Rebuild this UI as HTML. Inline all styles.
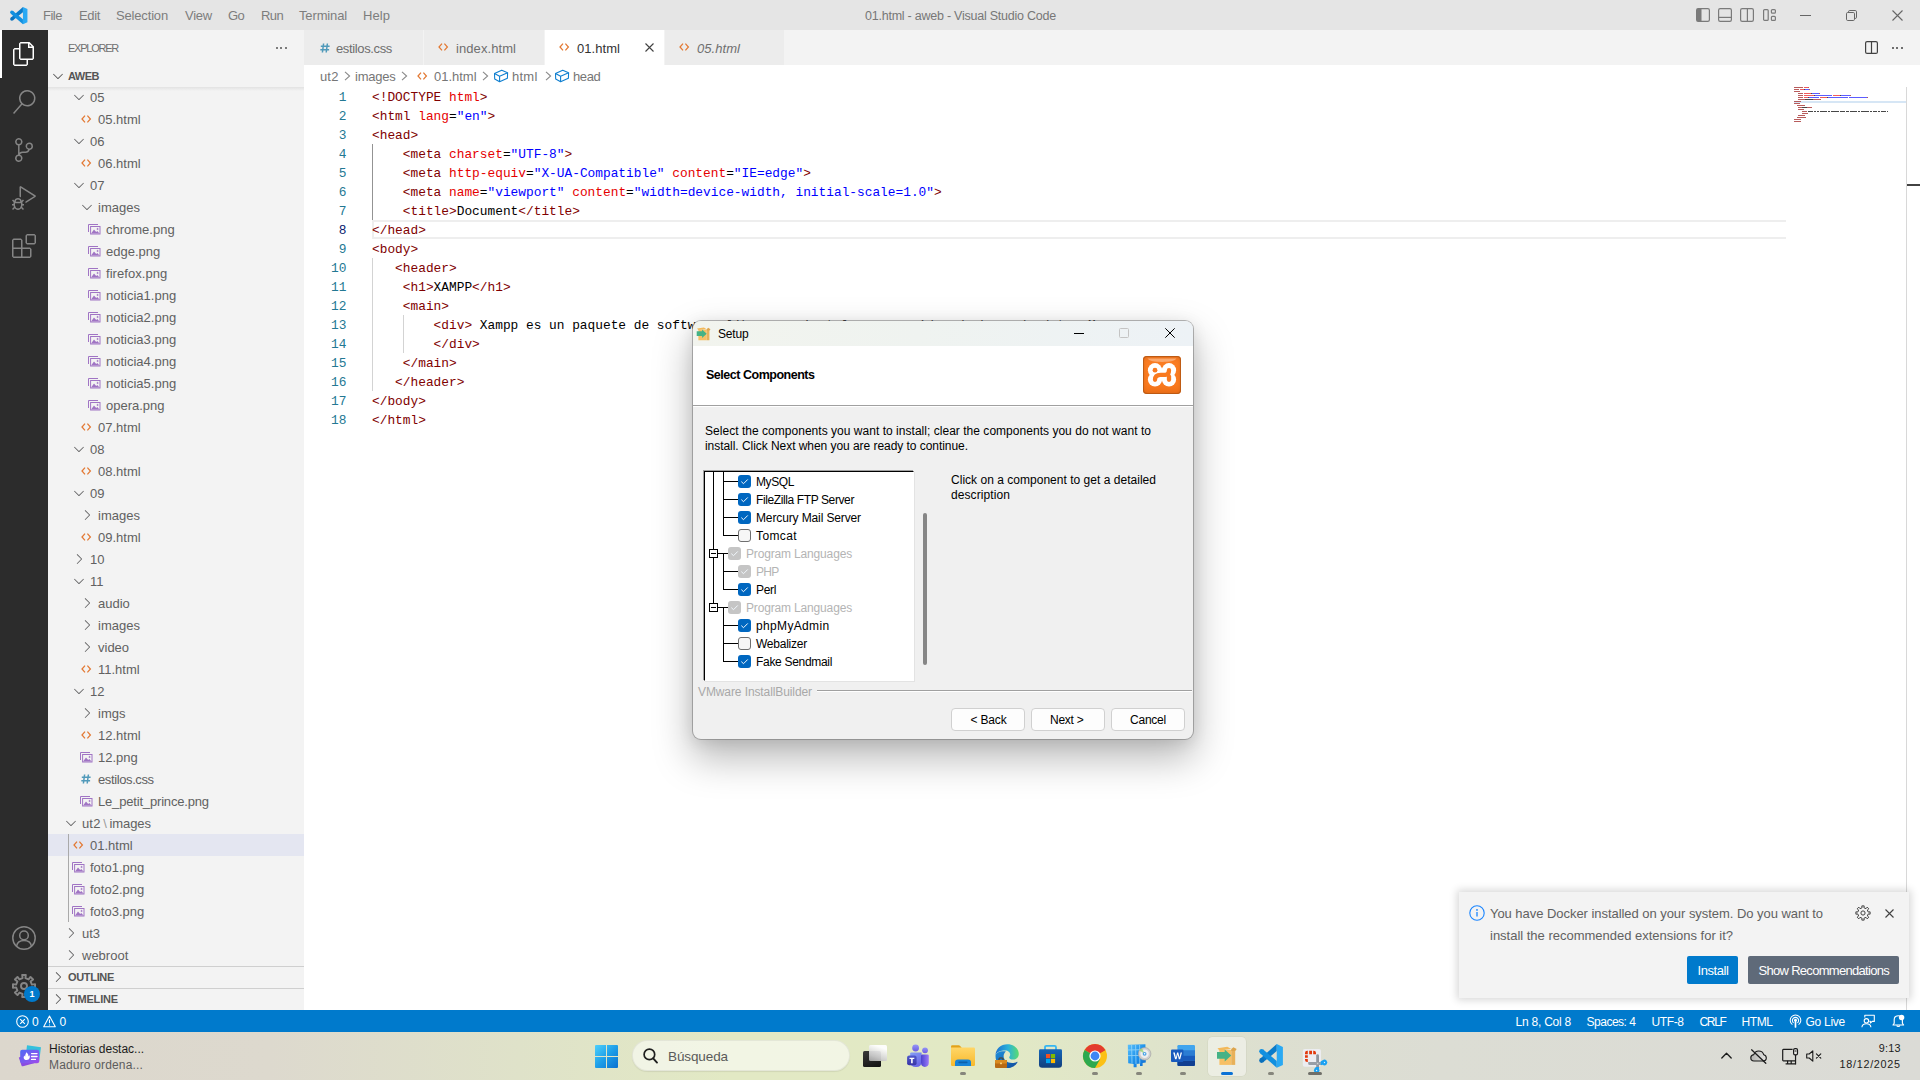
<!DOCTYPE html>
<html lang="en"><head><meta charset="utf-8"><title>01.html - aweb - Visual Studio Code</title>
<style>
*{box-sizing:border-box;margin:0;padding:0}
html,body{width:1920px;height:1080px;overflow:hidden;background:#fff}
body{font-family:"Liberation Sans",sans-serif;font-size:13px;color:#616161;position:relative}
.abs{position:absolute}
svg{display:block;overflow:visible}
/* title bar */
#titlebar{position:absolute;left:0;top:0;width:1920px;height:30px;background:#e5e5e5}
#titlebar .menu{position:absolute;top:0;height:30px;line-height:30px;font-size:13px;color:#808080;white-space:nowrap}
#titlebar .title{position:absolute;top:0;height:30px;line-height:30px;font-size:12.4px;color:#707070;white-space:nowrap}
/* activity bar */
#activity{position:absolute;left:0;top:30px;width:48px;height:980px;background:#2c2c2c}
/* sidebar */
#sidebar{position:absolute;left:48px;top:30px;width:256px;height:980px;background:#f3f3f3;overflow:hidden}
.row{position:absolute;left:0;width:256px;height:22px;line-height:22px;font-size:13px;color:#616161;white-space:nowrap}
.row .lbl{position:absolute;top:0}
.row svg{position:absolute}
/* editor */
#tabs{position:absolute;left:304px;top:30px;width:1616px;height:35px;background:#f3f3f3}
.tab{position:absolute;top:0;height:35px;background:#ececec;line-height:35px;font-size:13px;color:#6f6f6f;white-space:nowrap}
.tab.active{background:#fff;color:#333}
.tab .lbl{position:absolute;top:0}
#crumbs{position:absolute;left:304px;top:65px;width:1616px;height:22px;background:#fff;line-height:22px;font-size:13px;color:#767676;white-space:nowrap}
#crumbs span,#crumbs svg{position:absolute}
#editor{position:absolute;left:304px;top:87px;width:1616px;height:923px;background:#fff;overflow:hidden}
.ln{position:absolute;left:0;margin-top:.7px;width:42.5px;text-align:right;height:19px;line-height:19px;font-family:"Liberation Mono",monospace;font-size:12.83px;color:#237893;white-space:pre}
.cl{position:absolute;left:68px;margin-top:.7px;height:19px;line-height:19px;font-family:"Liberation Mono",monospace;font-size:12.83px;color:#000;white-space:pre}
.t{color:#800000}.a{color:#e50000}.s{color:#0000ff}
/* status bar */
#status{position:absolute;left:0;top:1010px;width:1920px;height:22px;background:#007acc;color:#fff;font-size:12px;line-height:22px;white-space:nowrap}
#status span,#status svg{position:absolute}
/* taskbar */
#taskbar{position:absolute;left:0;top:1032px;width:1920px;height:48px;background:linear-gradient(90deg,#dcd7cd 0%,#ddd9ce 14%,#dfe2c9 27%,#e2e9c4 38%,#e2e9c5 52%,#dfe4cb 60%,#dddfd0 66%,#dcddd4 75%,#dbdbd6 100%)}
</style></head>
<body>
<div id="titlebar">
<svg style="position:absolute;left:10.00px;top:6.50px;" width="17.5" height="17.5" viewBox="0 0 24 24"><path d="M17.75 .1 L1.04 14.67 L4.16 18.33 L17.75 7.1 Z" fill="#0a7bca"/><circle cx="2.6" cy="16.5" r="2.4" fill="#0a70bb"/><path d="M17.75 23.7 L1.04 9.13 L4.16 5.47 L17.75 16.9 Z" fill="#1290e0"/><circle cx="2.6" cy="7.3" r="2.4" fill="#1290e0"/><path d="M17.75 .1 L23.9 2.9 V20.9 L17.75 23.7 Z" fill="#2aa9f3"/></svg>
<span style="position:absolute;top:0.80px;height:30px;line-height:30px;font-size:13px;white-space:pre;left:43.00px;color:#7d7d7d;letter-spacing:-0.487px;">File</span>
<span style="position:absolute;top:0.80px;height:30px;line-height:30px;font-size:13px;white-space:pre;left:79.00px;color:#7d7d7d;letter-spacing:-0.350px;">Edit</span>
<span style="position:absolute;top:0.80px;height:30px;line-height:30px;font-size:13px;white-space:pre;left:116.00px;color:#7d7d7d;letter-spacing:-0.165px;">Selection</span>
<span style="position:absolute;top:0.80px;height:30px;line-height:30px;font-size:13px;white-space:pre;left:185.00px;color:#7d7d7d;letter-spacing:-0.236px;">View</span>
<span style="position:absolute;top:0.80px;height:30px;line-height:30px;font-size:13px;white-space:pre;left:228.00px;color:#7d7d7d;letter-spacing:-0.671px;">Go</span>
<span style="position:absolute;top:0.80px;height:30px;line-height:30px;font-size:13px;white-space:pre;left:261.00px;color:#7d7d7d;letter-spacing:-0.616px;">Run</span>
<span style="position:absolute;top:0.80px;height:30px;line-height:30px;font-size:13px;white-space:pre;left:299.00px;color:#7d7d7d;letter-spacing:-0.141px;">Terminal</span>
<span style="position:absolute;top:0.80px;height:30px;line-height:30px;font-size:13px;white-space:pre;left:363.00px;color:#7d7d7d;letter-spacing:0.066px;">Help</span>
<span style="position:absolute;top:0.80px;height:30px;line-height:30px;font-size:12.5px;white-space:pre;left:865.00px;color:#777;letter-spacing:-0.234px;">01.html - aweb - Visual Studio Code</span>
<svg style="position:absolute;left:1696.00px;top:8.00px;" width="14" height="14" viewBox="0 0 14 14"><rect x=".6" y=".6" width="12.8" height="12.8" rx="1.6" fill="none" stroke="#7a7a7a" stroke-width="1.2"/><path d="M.6 2.2 Q.6 .6 2.2 .6 H5.5 V13.4 H2.2 Q.6 13.4 .6 11.8Z" fill="#7a7a7a"/></svg>
<svg style="position:absolute;left:1718.00px;top:8.00px;" width="14" height="14" viewBox="0 0 14 14"><rect x=".6" y=".6" width="12.8" height="12.8" rx="1.6" fill="none" stroke="#7a7a7a" stroke-width="1.2"/><path d="M.6 9.4H13.4" stroke="#7a7a7a" stroke-width="1.2"/></svg>
<svg style="position:absolute;left:1740.00px;top:8.00px;" width="14" height="14" viewBox="0 0 14 14"><rect x=".6" y=".6" width="12.8" height="12.8" rx="1.6" fill="none" stroke="#7a7a7a" stroke-width="1.2"/><path d="M7.4 .6V13.4" stroke="#7a7a7a" stroke-width="1.2"/></svg>
<svg style="position:absolute;left:1763.00px;top:9.00px;" width="13" height="12" viewBox="0 0 13 12"><rect x=".6" y=".6" width="4.6" height="10.8" rx="1" fill="none" stroke="#7a7a7a" stroke-width="1.2"/><rect x="8.4" y=".6" width="4" height="3.6" rx="1" fill="none" stroke="#7a7a7a" stroke-width="1.2"/><rect x="8.4" y="7.4" width="4" height="4" rx="1" fill="none" stroke="#7a7a7a" stroke-width="1.2"/></svg>
<div class="abs" style="left:1800px;top:15px;width:11px;height:1px;background:#666"></div>
<svg style="position:absolute;left:1846.00px;top:10.00px;" width="11" height="11" viewBox="0 0 11 11"><rect x=".5" y="2.5" width="8" height="8" rx="1.2" fill="none" stroke="#666" stroke-width="1"/><path d="M2.5 2.4 V1.8 Q2.5 .5 3.8 .5 H9.2 Q10.5 .5 10.5 1.8 V7.2 Q10.5 8.5 9.2 8.5 H8.6" fill="none" stroke="#666" stroke-width="1"/></svg>
<svg style="position:absolute;left:1892.00px;top:10.00px;" width="11" height="11" viewBox="0 0 11 11"><path d="M.5 .5 L10.5 10.5 M10.5 .5 L.5 10.5" stroke="#666" stroke-width="1.1" fill="none"/></svg>
</div>
<div id="activity">
<div class="abs" style="left:0;top:0;width:2px;height:48px;background:#fff"></div>
<svg style="position:absolute;left:12.00px;top:12.00px;" width="24" height="24" viewBox="0 0 24 24"><path fill="#fff" d="M17.5 0H8.5L7 1.5V6H2.5L1 7.5V22.5699L2.5 24H14.5699L16 22.5699V18H20.7L22 16.5699V4.5L17.5 0ZM17.5 2.12L19.88 4.5H17.5V2.12ZM14.5 22.5H2.5V7.5H7V16.5699L8.5 18H14.5V22.5ZM20.5 16.5H8.5V1.5H16V6H20.5V16.5Z"/></svg>
<svg style="position:absolute;left:12.00px;top:60.00px;" width="24" height="24" viewBox="0 0 24 24"><path fill="#858585" d="M15.25 0a8.25 8.25 0 0 0-6.18 13.72L1 22.88l1.12 1 8.05-9.12A8.251 8.251 0 1 0 15.25.01V0zm0 15a6.75 6.75 0 1 1 0-13.5 6.75 6.75 0 0 1 0 13.5z"/></svg>
<svg style="position:absolute;left:12.00px;top:108.00px;" width="24" height="24" viewBox="0 0 24 24"><path fill="#858585" d="M21.007 8.222A3.738 3.738 0 0 0 15.045 5.2a3.737 3.737 0 0 0 1.156 6.583 2.988 2.988 0 0 1-2.668 1.67h-2.99a4.456 4.456 0 0 0-2.989 1.165V7.4a3.737 3.737 0 1 0-1.494 0v9.117a3.776 3.776 0 1 0 1.816.099 2.99 2.99 0 0 1 2.668-1.667h2.99a4.484 4.484 0 0 0 4.223-3.039 3.736 3.736 0 0 0 3.25-3.687zM4.565 3.738a2.242 2.242 0 1 1 4.484 0 2.242 2.242 0 0 1-4.484 0zm4.484 16.441a2.242 2.242 0 1 1-4.484 0 2.242 2.242 0 0 1 4.484 0zm8.221-9.715a2.242 2.242 0 1 1 0-4.485 2.242 2.242 0 0 1 0 4.485z"/></svg>
<svg style="position:absolute;left:12.00px;top:156.00px;" width="24" height="24" viewBox="0 0 24 24"><path fill="#858585" d="M10.94 13.5l-1.32 1.32a3.73 3.73 0 0 0-7.24 0L1.06 13.5 0 14.56l1.72 1.72-.22.22V18H0v1.5h1.5v.08c.077.489.214.966.41 1.42L0 22.94 1.06 24l1.65-1.65A4.308 4.308 0 0 0 6 24a4.31 4.31 0 0 0 3.29-1.65L10.94 24 12 22.94 10.09 21c.198-.464.336-.951.41-1.45v-.1H12V18h-1.5v-1.5l-.22-.22L12 14.56l-1.06-1.06zM6 13.5a2.25 2.25 0 0 1 2.25 2.25h-4.5A2.25 2.25 0 0 1 6 13.5zm3 6a3.33 3.33 0 0 1-3 3 3.33 3.33 0 0 1-3-3v-2.25h6v2.25zm14.76-9.9v1.26L13.5 17.37V15.6l8.5-5.37L9 2v9.46a5.07 5.07 0 0 0-1.5-.72V.63L8.64 0l15.12 9.6z"/></svg>
<svg style="position:absolute;left:12.00px;top:204.00px;" width="24" height="24" viewBox="0 0 24 24"><path fill="#858585" d="M13.5 1.5L15 0h7.5L24 1.5V9l-1.5 1.5H15L13.5 9V1.5zm1.5 0V9h7.5V1.5H15zM0 15V6l1.5-1.5H9L10.5 6v7.5H18l1.5 1.5v7.5L18 24H1.5L0 22.5V15zm9-1.5V6H1.5v7.5H9zM9 15H1.5v7.5H9V15zm1.5 7.5H18V15h-7.5v7.5z"/></svg>
<svg style="position:absolute;left:12.00px;top:896.00px;" width="24" height="24" viewBox="0 0 24 24"><circle cx="12" cy="12" r="11.2" fill="none" stroke="#858585" stroke-width="1.5"/><circle cx="12" cy="9.4" r="4.3" fill="none" stroke="#858585" stroke-width="1.5"/><path d="M4.6 20.2 C5.2 16.4 8 14.6 12 14.6 C16 14.6 18.8 16.4 19.4 20.2" fill="none" stroke="#858585" stroke-width="1.5"/></svg>
<svg style="position:absolute;left:12.00px;top:943.50px;" width="24" height="24" viewBox="0 0 24 24"><path d="M10.59 4.12 L10.16 0.95 L13.84 0.95 L13.41 4.12 L16.57 5.44 L18.51 2.89 L21.11 5.49 L18.56 7.43 L19.88 10.59 L23.05 10.16 L23.05 13.84 L19.88 13.41 L18.56 16.57 L21.11 18.51 L18.51 21.11 L16.57 18.56 L13.41 19.88 L13.84 23.05 L10.16 23.05 L10.59 19.88 L7.43 18.56 L5.49 21.11 L2.89 18.51 L5.44 16.57 L4.12 13.41 L0.95 13.84 L0.95 10.16 L4.12 10.59 L5.44 7.43 L2.89 5.49 L5.49 2.89 L7.43 5.44Z" fill="none" stroke="#858585" stroke-width="1.9" stroke-linejoin="round"/><circle cx="12" cy="12" r="3" fill="none" stroke="#858585" stroke-width="1.9"/></svg>
<div class="abs" style="left:24px;top:956px;width:16px;height:16px;border-radius:8px;background:#007acc;color:#fff;font-size:9px;font-weight:700;line-height:16px;text-align:center">1</div>
</div>
<div id="sidebar">
<span style="position:absolute;top:8.00px;height:20px;line-height:20px;font-size:11px;white-space:pre;left:20.00px;color:#6f6f6f;letter-spacing:-1.239px;">EXPLORER</span>
<div class="abs" style="left:227.5px;top:17px;width:2px;height:2px;border-radius:1px;background:#555"></div>
<div class="abs" style="left:232.0px;top:17px;width:2px;height:2px;border-radius:1px;background:#555"></div>
<div class="abs" style="left:236.5px;top:17px;width:2px;height:2px;border-radius:1px;background:#555"></div>
<svg style="position:absolute;left:1.50px;top:37.50px;" width="16" height="16" viewBox="0 0 16 16"><path fill="#555" d="M7.976 10.072l4.357-4.357.62.618L8.284 11h-.618L3 6.333l.619-.618 4.357 4.357z"/></svg>
<span style="position:absolute;top:36.00px;height:20px;line-height:20px;font-size:11px;white-space:pre;left:20.00px;color:#555;font-weight:700;letter-spacing:-0.500px;">AWEB</span>
<div class="abs" style="left:0;top:57px;width:256px;height:4px;background:linear-gradient(#e2e2e2,rgba(243,243,243,0))"></div>
<div class="abs" style="left:0;top:804px;width:256px;height:22px;background:#e4e6f1"></div>
<div class="abs" style="left:20px;top:804px;width:1px;height:88px;background:#a9a9a9"></div>
<svg style="position:absolute;left:23.00px;top:59.00px;" width="16" height="16" viewBox="0 0 16 16"><path fill="#646465" d="M7.976 10.072l4.357-4.357.62.618L8.284 11h-.618L3 6.333l.619-.618 4.357 4.357z"/></svg>
<span style="position:absolute;top:56.80px;height:22px;line-height:22px;font-size:13px;white-space:pre;left:42.00px;color:#616161;">05</span>
<svg style="position:absolute;left:32.80px;top:85.00px;" width="10.4" height="8" viewBox="0 0 10.4 8"><path d="M4 .7 L1 4 L4 7.3 M6.4 .7 L9.4 4 L6.4 7.3" fill="none" stroke="#e37933" stroke-width="1.25"/></svg>
<span style="position:absolute;top:78.80px;height:22px;line-height:22px;font-size:13px;white-space:pre;left:50.00px;color:#616161;">05.html</span>
<svg style="position:absolute;left:23.00px;top:103.00px;" width="16" height="16" viewBox="0 0 16 16"><path fill="#646465" d="M7.976 10.072l4.357-4.357.62.618L8.284 11h-.618L3 6.333l.619-.618 4.357 4.357z"/></svg>
<span style="position:absolute;top:100.80px;height:22px;line-height:22px;font-size:13px;white-space:pre;left:42.00px;color:#616161;">06</span>
<svg style="position:absolute;left:32.80px;top:129.00px;" width="10.4" height="8" viewBox="0 0 10.4 8"><path d="M4 .7 L1 4 L4 7.3 M6.4 .7 L9.4 4 L6.4 7.3" fill="none" stroke="#e37933" stroke-width="1.25"/></svg>
<span style="position:absolute;top:122.80px;height:22px;line-height:22px;font-size:13px;white-space:pre;left:50.00px;color:#616161;">06.html</span>
<svg style="position:absolute;left:23.00px;top:147.00px;" width="16" height="16" viewBox="0 0 16 16"><path fill="#646465" d="M7.976 10.072l4.357-4.357.62.618L8.284 11h-.618L3 6.333l.619-.618 4.357 4.357z"/></svg>
<span style="position:absolute;top:144.80px;height:22px;line-height:22px;font-size:13px;white-space:pre;left:42.00px;color:#616161;">07</span>
<svg style="position:absolute;left:31.00px;top:169.00px;" width="16" height="16" viewBox="0 0 16 16"><path fill="#646465" d="M7.976 10.072l4.357-4.357.62.618L8.284 11h-.618L3 6.333l.619-.618 4.357 4.357z"/></svg>
<span style="position:absolute;top:166.80px;height:22px;line-height:22px;font-size:13px;white-space:pre;left:50.00px;color:#616161;">images</span>
<svg style="position:absolute;left:39.70px;top:193.80px;" width="12.5" height="10.5" viewBox="0 0 12.5 10.5"><path d="M.5 8 V.5 H10" fill="none" stroke="#a074c4" stroke-width="1"/><rect x="2.6" y="2.5" width="9.4" height="7.5" fill="none" stroke="#a074c4" stroke-width="1"/><path d="M3.1 9.5 L6 5.6 L8.2 8 L9.3 7 L11.5 9.5 Z" fill="#a074c4"/><path d="M9.6 3.6 l.45.9.9.45-.9.45-.45.9-.45-.9-.9-.45.9-.45z" fill="#a074c4"/></svg>
<span style="position:absolute;top:188.80px;height:22px;line-height:22px;font-size:13px;white-space:pre;left:58.00px;color:#616161;">chrome.png</span>
<svg style="position:absolute;left:39.70px;top:215.80px;" width="12.5" height="10.5" viewBox="0 0 12.5 10.5"><path d="M.5 8 V.5 H10" fill="none" stroke="#a074c4" stroke-width="1"/><rect x="2.6" y="2.5" width="9.4" height="7.5" fill="none" stroke="#a074c4" stroke-width="1"/><path d="M3.1 9.5 L6 5.6 L8.2 8 L9.3 7 L11.5 9.5 Z" fill="#a074c4"/><path d="M9.6 3.6 l.45.9.9.45-.9.45-.45.9-.45-.9-.9-.45.9-.45z" fill="#a074c4"/></svg>
<span style="position:absolute;top:210.80px;height:22px;line-height:22px;font-size:13px;white-space:pre;left:58.00px;color:#616161;">edge.png</span>
<svg style="position:absolute;left:39.70px;top:237.80px;" width="12.5" height="10.5" viewBox="0 0 12.5 10.5"><path d="M.5 8 V.5 H10" fill="none" stroke="#a074c4" stroke-width="1"/><rect x="2.6" y="2.5" width="9.4" height="7.5" fill="none" stroke="#a074c4" stroke-width="1"/><path d="M3.1 9.5 L6 5.6 L8.2 8 L9.3 7 L11.5 9.5 Z" fill="#a074c4"/><path d="M9.6 3.6 l.45.9.9.45-.9.45-.45.9-.45-.9-.9-.45.9-.45z" fill="#a074c4"/></svg>
<span style="position:absolute;top:232.80px;height:22px;line-height:22px;font-size:13px;white-space:pre;left:58.00px;color:#616161;letter-spacing:0.054px;">firefox.png</span>
<svg style="position:absolute;left:39.70px;top:259.80px;" width="12.5" height="10.5" viewBox="0 0 12.5 10.5"><path d="M.5 8 V.5 H10" fill="none" stroke="#a074c4" stroke-width="1"/><rect x="2.6" y="2.5" width="9.4" height="7.5" fill="none" stroke="#a074c4" stroke-width="1"/><path d="M3.1 9.5 L6 5.6 L8.2 8 L9.3 7 L11.5 9.5 Z" fill="#a074c4"/><path d="M9.6 3.6 l.45.9.9.45-.9.45-.45.9-.45-.9-.9-.45.9-.45z" fill="#a074c4"/></svg>
<span style="position:absolute;top:254.80px;height:22px;line-height:22px;font-size:13px;white-space:pre;left:58.00px;color:#616161;">noticia1.png</span>
<svg style="position:absolute;left:39.70px;top:281.80px;" width="12.5" height="10.5" viewBox="0 0 12.5 10.5"><path d="M.5 8 V.5 H10" fill="none" stroke="#a074c4" stroke-width="1"/><rect x="2.6" y="2.5" width="9.4" height="7.5" fill="none" stroke="#a074c4" stroke-width="1"/><path d="M3.1 9.5 L6 5.6 L8.2 8 L9.3 7 L11.5 9.5 Z" fill="#a074c4"/><path d="M9.6 3.6 l.45.9.9.45-.9.45-.45.9-.45-.9-.9-.45.9-.45z" fill="#a074c4"/></svg>
<span style="position:absolute;top:276.80px;height:22px;line-height:22px;font-size:13px;white-space:pre;left:58.00px;color:#616161;">noticia2.png</span>
<svg style="position:absolute;left:39.70px;top:303.80px;" width="12.5" height="10.5" viewBox="0 0 12.5 10.5"><path d="M.5 8 V.5 H10" fill="none" stroke="#a074c4" stroke-width="1"/><rect x="2.6" y="2.5" width="9.4" height="7.5" fill="none" stroke="#a074c4" stroke-width="1"/><path d="M3.1 9.5 L6 5.6 L8.2 8 L9.3 7 L11.5 9.5 Z" fill="#a074c4"/><path d="M9.6 3.6 l.45.9.9.45-.9.45-.45.9-.45-.9-.9-.45.9-.45z" fill="#a074c4"/></svg>
<span style="position:absolute;top:298.80px;height:22px;line-height:22px;font-size:13px;white-space:pre;left:58.00px;color:#616161;">noticia3.png</span>
<svg style="position:absolute;left:39.70px;top:325.80px;" width="12.5" height="10.5" viewBox="0 0 12.5 10.5"><path d="M.5 8 V.5 H10" fill="none" stroke="#a074c4" stroke-width="1"/><rect x="2.6" y="2.5" width="9.4" height="7.5" fill="none" stroke="#a074c4" stroke-width="1"/><path d="M3.1 9.5 L6 5.6 L8.2 8 L9.3 7 L11.5 9.5 Z" fill="#a074c4"/><path d="M9.6 3.6 l.45.9.9.45-.9.45-.45.9-.45-.9-.9-.45.9-.45z" fill="#a074c4"/></svg>
<span style="position:absolute;top:320.80px;height:22px;line-height:22px;font-size:13px;white-space:pre;left:58.00px;color:#616161;">noticia4.png</span>
<svg style="position:absolute;left:39.70px;top:347.80px;" width="12.5" height="10.5" viewBox="0 0 12.5 10.5"><path d="M.5 8 V.5 H10" fill="none" stroke="#a074c4" stroke-width="1"/><rect x="2.6" y="2.5" width="9.4" height="7.5" fill="none" stroke="#a074c4" stroke-width="1"/><path d="M3.1 9.5 L6 5.6 L8.2 8 L9.3 7 L11.5 9.5 Z" fill="#a074c4"/><path d="M9.6 3.6 l.45.9.9.45-.9.45-.45.9-.45-.9-.9-.45.9-.45z" fill="#a074c4"/></svg>
<span style="position:absolute;top:342.80px;height:22px;line-height:22px;font-size:13px;white-space:pre;left:58.00px;color:#616161;">noticia5.png</span>
<svg style="position:absolute;left:39.70px;top:369.80px;" width="12.5" height="10.5" viewBox="0 0 12.5 10.5"><path d="M.5 8 V.5 H10" fill="none" stroke="#a074c4" stroke-width="1"/><rect x="2.6" y="2.5" width="9.4" height="7.5" fill="none" stroke="#a074c4" stroke-width="1"/><path d="M3.1 9.5 L6 5.6 L8.2 8 L9.3 7 L11.5 9.5 Z" fill="#a074c4"/><path d="M9.6 3.6 l.45.9.9.45-.9.45-.45.9-.45-.9-.9-.45.9-.45z" fill="#a074c4"/></svg>
<span style="position:absolute;top:364.80px;height:22px;line-height:22px;font-size:13px;white-space:pre;left:58.00px;color:#616161;">opera.png</span>
<svg style="position:absolute;left:32.80px;top:393.00px;" width="10.4" height="8" viewBox="0 0 10.4 8"><path d="M4 .7 L1 4 L4 7.3 M6.4 .7 L9.4 4 L6.4 7.3" fill="none" stroke="#e37933" stroke-width="1.25"/></svg>
<span style="position:absolute;top:386.80px;height:22px;line-height:22px;font-size:13px;white-space:pre;left:50.00px;color:#616161;">07.html</span>
<svg style="position:absolute;left:23.00px;top:411.00px;" width="16" height="16" viewBox="0 0 16 16"><path fill="#646465" d="M7.976 10.072l4.357-4.357.62.618L8.284 11h-.618L3 6.333l.619-.618 4.357 4.357z"/></svg>
<span style="position:absolute;top:408.80px;height:22px;line-height:22px;font-size:13px;white-space:pre;left:42.00px;color:#616161;">08</span>
<svg style="position:absolute;left:32.80px;top:437.00px;" width="10.4" height="8" viewBox="0 0 10.4 8"><path d="M4 .7 L1 4 L4 7.3 M6.4 .7 L9.4 4 L6.4 7.3" fill="none" stroke="#e37933" stroke-width="1.25"/></svg>
<span style="position:absolute;top:430.80px;height:22px;line-height:22px;font-size:13px;white-space:pre;left:50.00px;color:#616161;">08.html</span>
<svg style="position:absolute;left:23.00px;top:455.00px;" width="16" height="16" viewBox="0 0 16 16"><path fill="#646465" d="M7.976 10.072l4.357-4.357.62.618L8.284 11h-.618L3 6.333l.619-.618 4.357 4.357z"/></svg>
<span style="position:absolute;top:452.80px;height:22px;line-height:22px;font-size:13px;white-space:pre;left:42.00px;color:#616161;">09</span>
<svg style="position:absolute;left:31.00px;top:477.00px;" width="16" height="16" viewBox="0 0 16 16"><path fill="#646465" d="M10.072 8.024L5.715 3.667l.618-.62L11 7.716v.618L6.333 13l-.618-.619 4.357-4.357z"/></svg>
<span style="position:absolute;top:474.80px;height:22px;line-height:22px;font-size:13px;white-space:pre;left:50.00px;color:#616161;">images</span>
<svg style="position:absolute;left:32.80px;top:503.00px;" width="10.4" height="8" viewBox="0 0 10.4 8"><path d="M4 .7 L1 4 L4 7.3 M6.4 .7 L9.4 4 L6.4 7.3" fill="none" stroke="#e37933" stroke-width="1.25"/></svg>
<span style="position:absolute;top:496.80px;height:22px;line-height:22px;font-size:13px;white-space:pre;left:50.00px;color:#616161;">09.html</span>
<svg style="position:absolute;left:23.00px;top:521.00px;" width="16" height="16" viewBox="0 0 16 16"><path fill="#646465" d="M10.072 8.024L5.715 3.667l.618-.62L11 7.716v.618L6.333 13l-.618-.619 4.357-4.357z"/></svg>
<span style="position:absolute;top:518.80px;height:22px;line-height:22px;font-size:13px;white-space:pre;left:42.00px;color:#616161;">10</span>
<svg style="position:absolute;left:23.00px;top:543.00px;" width="16" height="16" viewBox="0 0 16 16"><path fill="#646465" d="M7.976 10.072l4.357-4.357.62.618L8.284 11h-.618L3 6.333l.619-.618 4.357 4.357z"/></svg>
<span style="position:absolute;top:540.80px;height:22px;line-height:22px;font-size:13px;white-space:pre;left:42.00px;color:#616161;">11</span>
<svg style="position:absolute;left:31.00px;top:565.00px;" width="16" height="16" viewBox="0 0 16 16"><path fill="#646465" d="M10.072 8.024L5.715 3.667l.618-.62L11 7.716v.618L6.333 13l-.618-.619 4.357-4.357z"/></svg>
<span style="position:absolute;top:562.80px;height:22px;line-height:22px;font-size:13px;white-space:pre;left:50.00px;color:#616161;">audio</span>
<svg style="position:absolute;left:31.00px;top:587.00px;" width="16" height="16" viewBox="0 0 16 16"><path fill="#646465" d="M10.072 8.024L5.715 3.667l.618-.62L11 7.716v.618L6.333 13l-.618-.619 4.357-4.357z"/></svg>
<span style="position:absolute;top:584.80px;height:22px;line-height:22px;font-size:13px;white-space:pre;left:50.00px;color:#616161;">images</span>
<svg style="position:absolute;left:31.00px;top:609.00px;" width="16" height="16" viewBox="0 0 16 16"><path fill="#646465" d="M10.072 8.024L5.715 3.667l.618-.62L11 7.716v.618L6.333 13l-.618-.619 4.357-4.357z"/></svg>
<span style="position:absolute;top:606.80px;height:22px;line-height:22px;font-size:13px;white-space:pre;left:50.00px;color:#616161;">video</span>
<svg style="position:absolute;left:32.80px;top:635.00px;" width="10.4" height="8" viewBox="0 0 10.4 8"><path d="M4 .7 L1 4 L4 7.3 M6.4 .7 L9.4 4 L6.4 7.3" fill="none" stroke="#e37933" stroke-width="1.25"/></svg>
<span style="position:absolute;top:628.80px;height:22px;line-height:22px;font-size:13px;white-space:pre;left:50.00px;color:#616161;">11.html</span>
<svg style="position:absolute;left:23.00px;top:653.00px;" width="16" height="16" viewBox="0 0 16 16"><path fill="#646465" d="M7.976 10.072l4.357-4.357.62.618L8.284 11h-.618L3 6.333l.619-.618 4.357 4.357z"/></svg>
<span style="position:absolute;top:650.80px;height:22px;line-height:22px;font-size:13px;white-space:pre;left:42.00px;color:#616161;">12</span>
<svg style="position:absolute;left:31.00px;top:675.00px;" width="16" height="16" viewBox="0 0 16 16"><path fill="#646465" d="M10.072 8.024L5.715 3.667l.618-.62L11 7.716v.618L6.333 13l-.618-.619 4.357-4.357z"/></svg>
<span style="position:absolute;top:672.80px;height:22px;line-height:22px;font-size:13px;white-space:pre;left:50.00px;color:#616161;">imgs</span>
<svg style="position:absolute;left:32.80px;top:701.00px;" width="10.4" height="8" viewBox="0 0 10.4 8"><path d="M4 .7 L1 4 L4 7.3 M6.4 .7 L9.4 4 L6.4 7.3" fill="none" stroke="#e37933" stroke-width="1.25"/></svg>
<span style="position:absolute;top:694.80px;height:22px;line-height:22px;font-size:13px;white-space:pre;left:50.00px;color:#616161;">12.html</span>
<svg style="position:absolute;left:31.70px;top:721.80px;" width="12.5" height="10.5" viewBox="0 0 12.5 10.5"><path d="M.5 8 V.5 H10" fill="none" stroke="#a074c4" stroke-width="1"/><rect x="2.6" y="2.5" width="9.4" height="7.5" fill="none" stroke="#a074c4" stroke-width="1"/><path d="M3.1 9.5 L6 5.6 L8.2 8 L9.3 7 L11.5 9.5 Z" fill="#a074c4"/><path d="M9.6 3.6 l.45.9.9.45-.9.45-.45.9-.45-.9-.9-.45.9-.45z" fill="#a074c4"/></svg>
<span style="position:absolute;top:716.80px;height:22px;line-height:22px;font-size:13px;white-space:pre;left:50.00px;color:#616161;">12.png</span>
<svg style="position:absolute;left:33.00px;top:744.00px;" width="10" height="10" viewBox="0 0 10 10"><path d="M3.6 .5 L2.4 9.5 M7.4 .5 L6.2 9.5 M.8 3.2 H9.6 M.3 6.8 H9.1" fill="none" stroke="#519aba" stroke-width="1.5"/></svg>
<span style="position:absolute;top:738.80px;height:22px;line-height:22px;font-size:13px;white-space:pre;left:50.00px;color:#616161;letter-spacing:-0.387px;">estilos.css</span>
<svg style="position:absolute;left:31.70px;top:765.80px;" width="12.5" height="10.5" viewBox="0 0 12.5 10.5"><path d="M.5 8 V.5 H10" fill="none" stroke="#a074c4" stroke-width="1"/><rect x="2.6" y="2.5" width="9.4" height="7.5" fill="none" stroke="#a074c4" stroke-width="1"/><path d="M3.1 9.5 L6 5.6 L8.2 8 L9.3 7 L11.5 9.5 Z" fill="#a074c4"/><path d="M9.6 3.6 l.45.9.9.45-.9.45-.45.9-.45-.9-.9-.45.9-.45z" fill="#a074c4"/></svg>
<span style="position:absolute;top:760.80px;height:22px;line-height:22px;font-size:13px;white-space:pre;left:50.00px;color:#616161;letter-spacing:-0.174px;">Le_petit_prince.png</span>
<svg style="position:absolute;left:15.00px;top:785.00px;" width="16" height="16" viewBox="0 0 16 16"><path fill="#646465" d="M7.976 10.072l4.357-4.357.62.618L8.284 11h-.618L3 6.333l.619-.618 4.357 4.357z"/></svg>
<span style="position:absolute;top:782.80px;height:22px;line-height:22px;font-size:13px;white-space:pre;left:34.00px;color:#616161;letter-spacing:0.143px;">ut2</span>
<span style="position:absolute;top:782.80px;height:22px;line-height:22px;font-size:13px;white-space:pre;left:55.30px;color:#9a9a9a;">\</span>
<span style="position:absolute;top:782.80px;height:22px;line-height:22px;font-size:13px;white-space:pre;left:61.60px;color:#616161;letter-spacing:-0.118px;">images</span>
<svg style="position:absolute;left:24.80px;top:811.00px;" width="10.4" height="8" viewBox="0 0 10.4 8"><path d="M4 .7 L1 4 L4 7.3 M6.4 .7 L9.4 4 L6.4 7.3" fill="none" stroke="#e37933" stroke-width="1.25"/></svg>
<span style="position:absolute;top:804.80px;height:22px;line-height:22px;font-size:13px;white-space:pre;left:42.00px;color:#616161;">01.html</span>
<svg style="position:absolute;left:23.70px;top:831.80px;" width="12.5" height="10.5" viewBox="0 0 12.5 10.5"><path d="M.5 8 V.5 H10" fill="none" stroke="#a074c4" stroke-width="1"/><rect x="2.6" y="2.5" width="9.4" height="7.5" fill="none" stroke="#a074c4" stroke-width="1"/><path d="M3.1 9.5 L6 5.6 L8.2 8 L9.3 7 L11.5 9.5 Z" fill="#a074c4"/><path d="M9.6 3.6 l.45.9.9.45-.9.45-.45.9-.45-.9-.9-.45.9-.45z" fill="#a074c4"/></svg>
<span style="position:absolute;top:826.80px;height:22px;line-height:22px;font-size:13px;white-space:pre;left:42.00px;color:#616161;">foto1.png</span>
<svg style="position:absolute;left:23.70px;top:853.80px;" width="12.5" height="10.5" viewBox="0 0 12.5 10.5"><path d="M.5 8 V.5 H10" fill="none" stroke="#a074c4" stroke-width="1"/><rect x="2.6" y="2.5" width="9.4" height="7.5" fill="none" stroke="#a074c4" stroke-width="1"/><path d="M3.1 9.5 L6 5.6 L8.2 8 L9.3 7 L11.5 9.5 Z" fill="#a074c4"/><path d="M9.6 3.6 l.45.9.9.45-.9.45-.45.9-.45-.9-.9-.45.9-.45z" fill="#a074c4"/></svg>
<span style="position:absolute;top:848.80px;height:22px;line-height:22px;font-size:13px;white-space:pre;left:42.00px;color:#616161;">foto2.png</span>
<svg style="position:absolute;left:23.70px;top:875.80px;" width="12.5" height="10.5" viewBox="0 0 12.5 10.5"><path d="M.5 8 V.5 H10" fill="none" stroke="#a074c4" stroke-width="1"/><rect x="2.6" y="2.5" width="9.4" height="7.5" fill="none" stroke="#a074c4" stroke-width="1"/><path d="M3.1 9.5 L6 5.6 L8.2 8 L9.3 7 L11.5 9.5 Z" fill="#a074c4"/><path d="M9.6 3.6 l.45.9.9.45-.9.45-.45.9-.45-.9-.9-.45.9-.45z" fill="#a074c4"/></svg>
<span style="position:absolute;top:870.80px;height:22px;line-height:22px;font-size:13px;white-space:pre;left:42.00px;color:#616161;">foto3.png</span>
<svg style="position:absolute;left:15.00px;top:895.00px;" width="16" height="16" viewBox="0 0 16 16"><path fill="#646465" d="M10.072 8.024L5.715 3.667l.618-.62L11 7.716v.618L6.333 13l-.618-.619 4.357-4.357z"/></svg>
<span style="position:absolute;top:892.80px;height:22px;line-height:22px;font-size:13px;white-space:pre;left:34.00px;color:#616161;">ut3</span>
<svg style="position:absolute;left:15.00px;top:917.00px;" width="16" height="16" viewBox="0 0 16 16"><path fill="#646465" d="M10.072 8.024L5.715 3.667l.618-.62L11 7.716v.618L6.333 13l-.618-.619 4.357-4.357z"/></svg>
<span style="position:absolute;top:914.80px;height:22px;line-height:22px;font-size:13px;white-space:pre;left:34.00px;color:#616161;">webroot</span>
<div class="abs" style="left:0;top:936px;width:256px;height:1px;background:#cfcfcf"></div>
<div class="abs" style="left:0;top:937px;width:256px;height:21px;background:#f3f3f3"></div>
<svg style="position:absolute;left:1.50px;top:939.00px;" width="16" height="16" viewBox="0 0 16 16"><path fill="#555" d="M10.072 8.024L5.715 3.667l.618-.62L11 7.716v.618L6.333 13l-.618-.619 4.357-4.357z"/></svg>
<span style="position:absolute;top:937.00px;height:20px;line-height:20px;font-size:11px;white-space:pre;left:20.00px;color:#555;font-weight:700;letter-spacing:-0.325px;">OUTLINE</span>
<div class="abs" style="left:0;top:958px;width:256px;height:1px;background:#cfcfcf"></div>
<div class="abs" style="left:0;top:959px;width:256px;height:21px;background:#f3f3f3"></div>
<svg style="position:absolute;left:1.50px;top:961.00px;" width="16" height="16" viewBox="0 0 16 16"><path fill="#555" d="M10.072 8.024L5.715 3.667l.618-.62L11 7.716v.618L6.333 13l-.618-.619 4.357-4.357z"/></svg>
<span style="position:absolute;top:959.00px;height:20px;line-height:20px;font-size:11px;white-space:pre;left:20.00px;color:#555;font-weight:700;letter-spacing:-0.167px;">TIMELINE</span>
</div>
<div id="tabs">
<div class="tab" style="left:0px;width:119px">
<svg style="position:absolute;left:16.00px;top:12.50px;" width="10" height="10" viewBox="0 0 10 10"><path d="M3.6 .5 L2.4 9.5 M7.4 .5 L6.2 9.5 M.8 3.2 H9.6 M.3 6.8 H9.1" fill="none" stroke="#519aba" stroke-width="1.5"/></svg>
<span style="position:absolute;top:0.80px;height:35px;line-height:35px;font-size:13px;white-space:pre;left:32.00px;color:#6f6f6f;letter-spacing:-0.360px;">estilos.css</span>
</div>
<div class="tab" style="left:120px;width:120px">
<svg style="position:absolute;left:13.70px;top:12.50px;" width="10.4" height="8" viewBox="0 0 10.4 8"><path d="M4 .7 L1 4 L4 7.3 M6.4 .7 L9.4 4 L6.4 7.3" fill="none" stroke="#e37933" stroke-width="1.25"/></svg>
<span style="position:absolute;top:0.80px;height:35px;line-height:35px;font-size:13px;white-space:pre;left:32.00px;color:#6f6f6f;letter-spacing:0.075px;">index.html</span>
</div>
<div class="tab active" style="left:241px;width:119px">
<svg style="position:absolute;left:13.70px;top:12.50px;" width="10.4" height="8" viewBox="0 0 10.4 8"><path d="M4 .7 L1 4 L4 7.3 M6.4 .7 L9.4 4 L6.4 7.3" fill="none" stroke="#e37933" stroke-width="1.25"/></svg>
<span style="position:absolute;top:0.80px;height:35px;line-height:35px;font-size:13px;white-space:pre;left:32.00px;color:#333;letter-spacing:0.053px;">01.html</span>
<svg style="position:absolute;left:100.00px;top:13.00px;" width="9" height="9" viewBox="0 0 9 9"><path d="M.5 .5 L8.5 8.5 M8.5 .5 L.5 8.5" stroke="#424242" stroke-width="1.1" fill="none"/></svg>
</div>
<div class="tab" style="left:361px;width:119px">
<svg style="position:absolute;left:13.70px;top:12.50px;" width="10.4" height="8" viewBox="0 0 10.4 8"><path d="M4 .7 L1 4 L4 7.3 M6.4 .7 L9.4 4 L6.4 7.3" fill="none" stroke="#e37933" stroke-width="1.25"/></svg>
<span style="position:absolute;top:0.80px;height:35px;line-height:35px;font-size:13px;white-space:pre;left:32.00px;color:#6f6f6f;font-style:italic;letter-spacing:0.053px;">05.html</span>
</div>
<svg style="position:absolute;left:1561.00px;top:11.00px;" width="13" height="13" viewBox="0 0 13 13"><rect x=".6" y=".6" width="11.8" height="11.8" rx="1.5" fill="none" stroke="#424242" stroke-width="1.2"/><path d="M6.5 .6 V12.4" stroke="#424242" stroke-width="1.2"/></svg>
<div class="abs" style="left:1587.5px;top:17px;width:2px;height:2px;border-radius:1px;background:#424242"></div>
<div class="abs" style="left:1592.0px;top:17px;width:2px;height:2px;border-radius:1px;background:#424242"></div>
<div class="abs" style="left:1596.5px;top:17px;width:2px;height:2px;border-radius:1px;background:#424242"></div>
</div>
<div id="crumbs">
<span style="position:absolute;top:0.80px;height:22px;line-height:22px;font-size:13px;white-space:pre;left:16.00px;color:#767676;letter-spacing:0.143px;">ut2</span>
<svg style="position:absolute;left:39.50px;top:6.00px;" width="7" height="10" viewBox="0 0 7 10"><path d="M1 .8 L5.6 5 L1 9.2" fill="none" stroke="#8a8a8a" stroke-width="1.1"/></svg>
<span style="position:absolute;top:0.80px;height:22px;line-height:22px;font-size:13px;white-space:pre;left:51.00px;color:#767676;letter-spacing:-0.235px;">images</span>
<svg style="position:absolute;left:96.50px;top:6.00px;" width="7" height="10" viewBox="0 0 7 10"><path d="M1 .8 L5.6 5 L1 9.2" fill="none" stroke="#8a8a8a" stroke-width="1.1"/></svg>
<svg style="position:absolute;left:112.50px;top:6.50px;" width="10.4" height="8" viewBox="0 0 10.4 8"><path d="M4 .7 L1 4 L4 7.3 M6.4 .7 L9.4 4 L6.4 7.3" fill="none" stroke="#e37933" stroke-width="1.25"/></svg>
<span style="position:absolute;top:0.80px;height:22px;line-height:22px;font-size:13px;white-space:pre;left:130.00px;color:#767676;letter-spacing:-0.019px;">01.html</span>
<svg style="position:absolute;left:177.50px;top:6.00px;" width="7" height="10" viewBox="0 0 7 10"><path d="M1 .8 L5.6 5 L1 9.2" fill="none" stroke="#8a8a8a" stroke-width="1.1"/></svg>
<svg style="position:absolute;left:190.00px;top:4.00px;" width="14" height="14" viewBox="0 0 14 14"><path d="M7.7 1.2 L13.6 3.8 L5.6 7.2 L.5 4.6 Z M.5 4.6 L.7 9.9 L5.6 12.7 L13.4 9.2 L13.6 3.8 M5.6 7.2 V12.7" fill="none" stroke="#0f7fd0" stroke-width="1.1" stroke-linejoin="round"/></svg>
<span style="position:absolute;top:0.80px;height:22px;line-height:22px;font-size:13px;white-space:pre;left:208.00px;color:#767676;letter-spacing:0.235px;">html</span>
<svg style="position:absolute;left:240.50px;top:6.00px;" width="7" height="10" viewBox="0 0 7 10"><path d="M1 .8 L5.6 5 L1 9.2" fill="none" stroke="#8a8a8a" stroke-width="1.1"/></svg>
<svg style="position:absolute;left:251.00px;top:4.00px;" width="14" height="14" viewBox="0 0 14 14"><path d="M7.7 1.2 L13.6 3.8 L5.6 7.2 L.5 4.6 Z M.5 4.6 L.7 9.9 L5.6 12.7 L13.4 9.2 L13.6 3.8 M5.6 7.2 V12.7" fill="none" stroke="#0f7fd0" stroke-width="1.1" stroke-linejoin="round"/></svg>
<span style="position:absolute;top:0.80px;height:22px;line-height:22px;font-size:13px;white-space:pre;left:269.00px;color:#767676;letter-spacing:-0.355px;">head</span>
</div>
<div id="editor">
<div class="abs" style="left:68px;top:133px;width:1414px;height:19px;border:2px solid #eeeeee;border-right:0"></div>
<div class="abs" style="left:68px;top:57px;width:1px;height:76px;background:#939393"></div>
<div class="abs" style="left:68px;top:171px;width:1px;height:133px;background:#d3d3d3"></div>
<div class="abs" style="left:99px;top:228px;width:1px;height:38px;background:#d3d3d3"></div>
<div class="ln" style="top:0px;color:#237893">1</div>
<div class="cl" style="top:0px"><span class="t">&lt;!DOCTYPE</span> <span class="a">html</span><span class="t">&gt;</span></div>
<div class="ln" style="top:19px;color:#237893">2</div>
<div class="cl" style="top:19px"><span class="t">&lt;html</span> <span class="a">lang</span>=<span class="s">"en"</span><span class="t">&gt;</span></div>
<div class="ln" style="top:38px;color:#237893">3</div>
<div class="cl" style="top:38px"><span class="t">&lt;head&gt;</span></div>
<div class="ln" style="top:57px;color:#237893">4</div>
<div class="cl" style="top:57px">    <span class="t">&lt;meta</span> <span class="a">charset</span>=<span class="s">"UTF-8"</span><span class="t">&gt;</span></div>
<div class="ln" style="top:76px;color:#237893">5</div>
<div class="cl" style="top:76px">    <span class="t">&lt;meta</span> <span class="a">http-equiv</span>=<span class="s">"X-UA-Compatible"</span> <span class="a">content</span>=<span class="s">"IE=edge"</span><span class="t">&gt;</span></div>
<div class="ln" style="top:95px;color:#237893">6</div>
<div class="cl" style="top:95px">    <span class="t">&lt;meta</span> <span class="a">name</span>=<span class="s">"viewport"</span> <span class="a">content</span>=<span class="s">"width=device-width, initial-scale=1.0"</span><span class="t">&gt;</span></div>
<div class="ln" style="top:114px;color:#237893">7</div>
<div class="cl" style="top:114px">    <span class="t">&lt;title&gt;</span>Document<span class="t">&lt;/title&gt;</span></div>
<div class="ln" style="top:133px;color:#0b216f">8</div>
<div class="cl" style="top:133px"><span class="t">&lt;/head&gt;</span></div>
<div class="ln" style="top:152px;color:#237893">9</div>
<div class="cl" style="top:152px"><span class="t">&lt;body&gt;</span></div>
<div class="ln" style="top:171px;color:#237893">10</div>
<div class="cl" style="top:171px">   <span class="t">&lt;header&gt;</span></div>
<div class="ln" style="top:190px;color:#237893">11</div>
<div class="cl" style="top:190px">    <span class="t">&lt;h1&gt;</span>XAMPP<span class="t">&lt;/h1&gt;</span></div>
<div class="ln" style="top:209px;color:#237893">12</div>
<div class="cl" style="top:209px">    <span class="t">&lt;main&gt;</span></div>
<div class="ln" style="top:228px;color:#237893">13</div>
<div class="cl" style="top:228px">        <span class="t">&lt;div&gt;</span> Xampp es un paquete de software libre que instala un servidor de base de datos M</div>
<div class="ln" style="top:247px;color:#237893">14</div>
<div class="cl" style="top:247px">        <span class="t">&lt;/div&gt;</span></div>
<div class="ln" style="top:266px;color:#237893">15</div>
<div class="cl" style="top:266px">    <span class="t">&lt;/main&gt;</span></div>
<div class="ln" style="top:285px;color:#237893">16</div>
<div class="cl" style="top:285px">   <span class="t">&lt;/header&gt;</span></div>
<div class="ln" style="top:304px;color:#237893">17</div>
<div class="cl" style="top:304px"><span class="t">&lt;/body&gt;</span></div>
<div class="ln" style="top:323px;color:#237893">18</div>
<div class="cl" style="top:323px"><span class="t">&lt;/html&gt;</span></div>
<div class="abs" style="left:1490px;top:0px;width:112px;height:40px">
<div class="abs" style="left:0;top:14px;width:112px;height:2px;background:#d6e6f5"></div>
<div class="abs" style="left:0px;top:0px;width:9px;height:1.3px;background:#b04a4a;opacity:.9"></div>
<div class="abs" style="left:10px;top:0px;width:4px;height:1.3px;background:#ee4a4a;opacity:.9"></div>
<div class="abs" style="left:14px;top:0px;width:1px;height:1.3px;background:#b04a4a;opacity:.9"></div>
<div class="abs" style="left:0px;top:2px;width:5px;height:1.3px;background:#b04a4a;opacity:.9"></div>
<div class="abs" style="left:6px;top:2px;width:4px;height:1.3px;background:#ee4a4a;opacity:.9"></div>
<div class="abs" style="left:10px;top:2px;width:1px;height:1.3px;background:#333;opacity:.9"></div>
<div class="abs" style="left:11px;top:2px;width:4px;height:1.3px;background:#4a4aff;opacity:.9"></div>
<div class="abs" style="left:15px;top:2px;width:1px;height:1.3px;background:#b04a4a;opacity:.9"></div>
<div class="abs" style="left:0px;top:4px;width:6px;height:1.3px;background:#b04a4a;opacity:.9"></div>
<div class="abs" style="left:4px;top:6px;width:5px;height:1.3px;background:#b04a4a;opacity:.9"></div>
<div class="abs" style="left:10px;top:6px;width:7px;height:1.3px;background:#ee4a4a;opacity:.9"></div>
<div class="abs" style="left:17px;top:6px;width:1px;height:1.3px;background:#333;opacity:.9"></div>
<div class="abs" style="left:18px;top:6px;width:7px;height:1.3px;background:#4a4aff;opacity:.9"></div>
<div class="abs" style="left:25px;top:6px;width:1px;height:1.3px;background:#b04a4a;opacity:.9"></div>
<div class="abs" style="left:4px;top:8px;width:5px;height:1.3px;background:#b04a4a;opacity:.9"></div>
<div class="abs" style="left:10px;top:8px;width:10px;height:1.3px;background:#ee4a4a;opacity:.9"></div>
<div class="abs" style="left:20px;top:8px;width:1px;height:1.3px;background:#333;opacity:.9"></div>
<div class="abs" style="left:21px;top:8px;width:17px;height:1.3px;background:#4a4aff;opacity:.9"></div>
<div class="abs" style="left:39px;top:8px;width:7px;height:1.3px;background:#ee4a4a;opacity:.9"></div>
<div class="abs" style="left:46px;top:8px;width:1px;height:1.3px;background:#333;opacity:.9"></div>
<div class="abs" style="left:47px;top:8px;width:9px;height:1.3px;background:#4a4aff;opacity:.9"></div>
<div class="abs" style="left:56px;top:8px;width:1px;height:1.3px;background:#b04a4a;opacity:.9"></div>
<div class="abs" style="left:4px;top:10px;width:5px;height:1.3px;background:#b04a4a;opacity:.9"></div>
<div class="abs" style="left:10px;top:10px;width:4px;height:1.3px;background:#ee4a4a;opacity:.9"></div>
<div class="abs" style="left:14px;top:10px;width:1px;height:1.3px;background:#333;opacity:.9"></div>
<div class="abs" style="left:15px;top:10px;width:10px;height:1.3px;background:#4a4aff;opacity:.9"></div>
<div class="abs" style="left:26px;top:10px;width:7px;height:1.3px;background:#ee4a4a;opacity:.9"></div>
<div class="abs" style="left:33px;top:10px;width:1px;height:1.3px;background:#333;opacity:.9"></div>
<div class="abs" style="left:34px;top:10px;width:20px;height:1.3px;background:#4a4aff;opacity:.9"></div>
<div class="abs" style="left:55px;top:10px;width:18px;height:1.3px;background:#4a4aff;opacity:.9"></div>
<div class="abs" style="left:73px;top:10px;width:1px;height:1.3px;background:#b04a4a;opacity:.9"></div>
<div class="abs" style="left:4px;top:12px;width:7px;height:1.3px;background:#b04a4a;opacity:.9"></div>
<div class="abs" style="left:11px;top:12px;width:8px;height:1.3px;background:#333;opacity:.9"></div>
<div class="abs" style="left:19px;top:12px;width:8px;height:1.3px;background:#b04a4a;opacity:.9"></div>
<div class="abs" style="left:0px;top:14px;width:7px;height:1.3px;background:#b04a4a;opacity:.9"></div>
<div class="abs" style="left:0px;top:16px;width:6px;height:1.3px;background:#b04a4a;opacity:.9"></div>
<div class="abs" style="left:3px;top:18px;width:8px;height:1.3px;background:#b04a4a;opacity:.9"></div>
<div class="abs" style="left:4px;top:20px;width:4px;height:1.3px;background:#b04a4a;opacity:.9"></div>
<div class="abs" style="left:8px;top:20px;width:5px;height:1.3px;background:#333;opacity:.9"></div>
<div class="abs" style="left:13px;top:20px;width:5px;height:1.3px;background:#b04a4a;opacity:.9"></div>
<div class="abs" style="left:4px;top:22px;width:6px;height:1.3px;background:#b04a4a;opacity:.9"></div>
<div class="abs" style="left:8px;top:24px;width:5px;height:1.3px;background:#b04a4a;opacity:.9"></div>
<div class="abs" style="left:14px;top:24px;width:5px;height:1.3px;background:#333;opacity:.9"></div>
<div class="abs" style="left:20px;top:24px;width:2px;height:1.3px;background:#333;opacity:.9"></div>
<div class="abs" style="left:23px;top:24px;width:2px;height:1.3px;background:#333;opacity:.9"></div>
<div class="abs" style="left:26px;top:24px;width:7px;height:1.3px;background:#333;opacity:.9"></div>
<div class="abs" style="left:34px;top:24px;width:2px;height:1.3px;background:#333;opacity:.9"></div>
<div class="abs" style="left:37px;top:24px;width:8px;height:1.3px;background:#333;opacity:.9"></div>
<div class="abs" style="left:46px;top:24px;width:5px;height:1.3px;background:#333;opacity:.9"></div>
<div class="abs" style="left:52px;top:24px;width:3px;height:1.3px;background:#333;opacity:.9"></div>
<div class="abs" style="left:56px;top:24px;width:7px;height:1.3px;background:#333;opacity:.9"></div>
<div class="abs" style="left:64px;top:24px;width:2px;height:1.3px;background:#333;opacity:.9"></div>
<div class="abs" style="left:67px;top:24px;width:8px;height:1.3px;background:#333;opacity:.9"></div>
<div class="abs" style="left:76px;top:24px;width:2px;height:1.3px;background:#333;opacity:.9"></div>
<div class="abs" style="left:79px;top:24px;width:4px;height:1.3px;background:#333;opacity:.9"></div>
<div class="abs" style="left:84px;top:24px;width:2px;height:1.3px;background:#333;opacity:.9"></div>
<div class="abs" style="left:87px;top:24px;width:5px;height:1.3px;background:#333;opacity:.9"></div>
<div class="abs" style="left:93px;top:24px;width:1px;height:1.3px;background:#333;opacity:.9"></div>
<div class="abs" style="left:8px;top:26px;width:6px;height:1.3px;background:#b04a4a;opacity:.9"></div>
<div class="abs" style="left:4px;top:28px;width:7px;height:1.3px;background:#b04a4a;opacity:.9"></div>
<div class="abs" style="left:3px;top:30px;width:9px;height:1.3px;background:#b04a4a;opacity:.9"></div>
<div class="abs" style="left:0px;top:32px;width:7px;height:1.3px;background:#b04a4a;opacity:.9"></div>
<div class="abs" style="left:0px;top:34px;width:7px;height:1.3px;background:#b04a4a;opacity:.9"></div>
</div>
<div class="abs" style="left:1602px;top:0;width:1px;height:923px;background:#d8d8d8"></div>
<div class="abs" style="left:1603px;top:97px;width:13px;height:2px;background:#424242"></div>
</div>
<div id="status">
<svg style="position:absolute;left:15.50px;top:4.50px;" width="13" height="13" viewBox="0 0 13 13"><circle cx="6.5" cy="6.5" r="5.8" fill="none" stroke="#fff" stroke-width="1.1"/><path d="M4.2 4.2 L8.8 8.8 M8.8 4.2 L4.2 8.8" stroke="#fff" stroke-width="1.1"/></svg>
<span style="position:absolute;top:0.80px;height:22px;line-height:22px;font-size:12px;white-space:pre;left:32.00px;color:#fff;">0</span>
<svg style="position:absolute;left:43.00px;top:4.50px;" width="13" height="13" viewBox="0 0 13 13"><path d="M6.5 1 L12.3 11.8 H.7 Z" fill="none" stroke="#fff" stroke-width="1.1" stroke-linejoin="round"/><path d="M6.5 4.6 V8.3 M6.5 9.4 V10.6" stroke="#fff" stroke-width="1.1"/></svg>
<span style="position:absolute;top:0.80px;height:22px;line-height:22px;font-size:12px;white-space:pre;left:59.50px;color:#fff;">0</span>
<span style="position:absolute;top:0.80px;height:22px;line-height:22px;font-size:12px;white-space:pre;left:1515.50px;color:#fff;letter-spacing:-0.231px;">Ln 8, Col 8</span>
<span style="position:absolute;top:0.80px;height:22px;line-height:22px;font-size:12px;white-space:pre;left:1586.50px;color:#fff;letter-spacing:-0.485px;">Spaces: 4</span>
<span style="position:absolute;top:0.80px;height:22px;line-height:22px;font-size:12px;white-space:pre;left:1651.50px;color:#fff;letter-spacing:-0.400px;">UTF-8</span>
<span style="position:absolute;top:0.80px;height:22px;line-height:22px;font-size:12px;white-space:pre;left:1699.50px;color:#fff;letter-spacing:-1.334px;">CRLF</span>
<span style="position:absolute;top:0.80px;height:22px;line-height:22px;font-size:12px;white-space:pre;left:1741.50px;color:#fff;letter-spacing:-0.417px;">HTML</span>
<span style="position:absolute;top:0.80px;height:22px;line-height:22px;font-size:12px;white-space:pre;left:1805.50px;color:#fff;letter-spacing:-0.265px;">Go Live</span>
<svg style="position:absolute;left:1789.00px;top:4.00px;" width="13" height="14" viewBox="0 0 13 14"><circle cx="6.5" cy="6.2" r="1.4" fill="#fff"/><path d="M6.5 6.6 V12.9" stroke="#fff" stroke-width="1.7" stroke-linecap="round"/><path d="M4.6 8.9 A3.1 3.1 0 1 1 8.4 8.9" fill="none" stroke="#fff" stroke-width="1.05"/><path d="M3.4 10.6 A5.3 5.3 0 1 1 9.6 10.6" fill="none" stroke="#fff" stroke-width="1.05"/></svg>
<svg style="position:absolute;left:1861.00px;top:4.00px;" width="14" height="14" viewBox="0 0 14 14"><path d="M3.8 3.4 V1.2 H13.3 V7.4 H11.2 L9.4 9 V7.4 H8.4" fill="none" stroke="#fff" stroke-width="1.1" stroke-linejoin="round"/><circle cx="5.4" cy="6.8" r="2.2" fill="#007acc" stroke="#fff" stroke-width="1.1"/><path d="M.9 13.2 C1.1 10.8 2.9 9.8 5.4 9.8 C7.9 9.8 9.7 10.8 9.9 13.2" fill="none" stroke="#fff" stroke-width="1.1"/></svg>
<svg style="position:absolute;left:1892.00px;top:4.00px;" width="14" height="14" viewBox="0 0 14 14"><path d="M1 11 H11.6 L10.4 9.2 V5.8 C10.4 3.3 8.6 1.7 6.3 1.7 C4 1.7 2.2 3.3 2.2 5.8 V9.2 Z" fill="none" stroke="#fff" stroke-width="1.15" stroke-linejoin="round"/><path d="M4.8 11.4 C5 12.9 7.6 12.9 7.8 11.4" fill="none" stroke="#fff" stroke-width="1.15"/><circle cx="9.6" cy="3.5" r="2.7" fill="#fff"/></svg>
</div>
<div id="taskbar">
<svg style="position:absolute;left:18.00px;top:12.00px;" width="24" height="24" viewBox="0 0 24 24"><defs><linearGradient id="wg1" x1="0" y1="0" x2="1" y2="1"><stop offset="0" stop-color="#4f6bf5"/><stop offset="1" stop-color="#a14bea"/></linearGradient></defs><path d="M9 1.2 L23 3.2 L21.2 17 L7.4 15 Z" fill="#35c0dc"/><path d="M.8 13.5 L3.5 21.5 Q3.8 22.6 5 22.3 L16 19.2 L13.6 9.6 Z" fill="#8a4be0"/><rect x="2.2" y="5.8" width="19" height="13.4" rx="2" fill="url(#wg1)"/><path d="M8.3 8.3 C10.4 10 10.6 11.4 10.3 12.4 C11.2 12 11.2 11 11.2 11 C12.4 12.6 12 16 8.6 16 C5.4 16 5 12.8 6.6 11.4 C6.6 12.2 7.2 12.6 7.2 12.6 C7 10.8 8 9.6 8.3 8.3 Z" fill="#fff"/><path d="M13.6 9.6 H19 M13.6 12.5 H19 M13.6 15.4 H17.4" stroke="#fff" stroke-width="1.4" stroke-linecap="round"/></svg>
<span style="position:absolute;top:8.80px;height:16px;line-height:16px;font-size:12px;white-space:pre;left:49.00px;color:#1b1b1b;letter-spacing:-0.019px;">Historias destac...</span>
<span style="position:absolute;top:24.80px;height:16px;line-height:16px;font-size:12px;white-space:pre;left:49.00px;color:#5d5d5d;letter-spacing:0.163px;">Maduro ordena...</span>
<svg style="position:absolute;left:595.00px;top:13.00px;" width="23" height="23" viewBox="0 0 23 23"><defs><linearGradient id="wl" x1="0" y1="0" x2="1" y2="1"><stop offset="0" stop-color="#4fd0fb"/><stop offset=".5" stop-color="#1e9fe8"/><stop offset="1" stop-color="#0a6fd0"/></linearGradient></defs><path d="M0 1 Q0 0 1 0 H11 V11 H0 Z M12 0 H22 Q23 0 23 1 V11 H12 Z M0 12 H11 V23 H1 Q0 23 0 22 Z M12 12 H23 V22 Q23 23 22 23 H12 Z" fill="url(#wl)"/></svg>
<div class="abs" style="left:632px;top:7.900000000000091px;width:218px;height:31.4px;border-radius:15.5px;background:rgba(255,255,255,.55);border:1px solid rgba(0,0,0,.06);box-shadow:0 1px 1px rgba(0,0,0,.08)"></div>
<svg style="position:absolute;left:642.50px;top:15.50px;" width="15" height="16" viewBox="0 0 15 16"><circle cx="6.4" cy="6.4" r="5.3" fill="none" stroke="#1f1f1f" stroke-width="1.7"/><path d="M10.2 10.4 L14 14.6" stroke="#1f1f1f" stroke-width="1.9" stroke-linecap="round"/></svg>
<span style="position:absolute;top:14.80px;height:20px;line-height:20px;font-size:13.5px;white-space:pre;left:668.00px;color:#5a5a5a;letter-spacing:-0.101px;">Búsqueda</span>
<div class="abs" style="left:863px;top:19px;width:18px;height:16px;border-radius:1.5px;background:linear-gradient(160deg,#3a3a3a,#111)"></div>
<div class="abs" style="left:869px;top:13px;width:18px;height:15.5px;border-radius:1.5px;background:linear-gradient(200deg,#ffffff 20%,#d0d0d0 70%,#a9a9a9);opacity:.93"></div>
<svg style="position:absolute;left:907.00px;top:11.50px;" width="22" height="23.5" viewBox="0 0 22 23.5"><defs><linearGradient id="tm" x1="0" y1="0" x2=".6" y2="1"><stop offset="0" stop-color="#86a0f6"/><stop offset="1" stop-color="#6a66e6"/></linearGradient><linearGradient id="tm2" x1="0" y1="0" x2="1" y2="0"><stop offset="0" stop-color="#4c43cf"/><stop offset="1" stop-color="#9a7af8"/></linearGradient><linearGradient id="tm3" x1="0" y1="0" x2="0" y2="1"><stop offset="0" stop-color="#5059cc"/><stop offset="1" stop-color="#3936a6"/></linearGradient><linearGradient id="tm4" x1="0" y1="0" x2="0" y2="1"><stop offset="0" stop-color="#9696f7"/><stop offset="1" stop-color="#6c5ce2"/></linearGradient></defs><circle cx="8.6" cy="4" r="3.4" fill="url(#tm4)"/><circle cx="18.05" cy="6.35" r="2.9" fill="url(#tm4)"/><path d="M3.2 9.6 Q3.2 8.4 4.4 8.4 H14.6 V17.4 Q14.6 22.9 9 22.9 Q3.2 22.9 3.2 17.4 Z" fill="url(#tm)"/><path d="M14 11.8 Q14 10.4 15.4 10.4 H20.4 Q21.8 10.4 21.8 11.8 V18.6 Q21.8 22.9 17.9 22.9 Q14 22.9 14 18.6 Z" fill="url(#tm2)"/><rect x=".1" y="11.4" width="9.5" height="9.8" rx="2" fill="url(#tm3)"/><path d="M2.5 13.7 H7.3 V15.1 H5.7 V19.3 H4.1 V15.1 H2.5 Z" fill="#fff"/></svg>
<svg style="position:absolute;left:951.00px;top:13.00px;" width="24" height="21.5" viewBox="0 0 24 21.5"><defs><linearGradient id="fx" x1="0" y1="0" x2="0" y2="1"><stop offset="0" stop-color="#ffd667"/><stop offset="1" stop-color="#f7b92c"/></linearGradient></defs><path d="M0 1.6 Q0 .3 1.3 .3 H7.6 Q8.6 .3 9.2 1 L10.8 3 H0 Z" fill="#e2a21a"/><path d="M0 2.6 H22.8 Q24 2.6 24 3.8 V19.8 Q24 21 22.8 21 H1.2 Q0 21 0 19.8 Z" fill="url(#fx)"/><path d="M4 21 V17.6 Q4 14.6 7 14.6 H17 Q20 14.6 20 17.6 V21 Z" fill="#1784d8"/><path d="M8.2 17.4 H15.8" stroke="#0d62ad" stroke-width="1.6" stroke-linecap="round"/></svg>
<div class="abs" style="left:960.0px;top:40px;width:6px;height:3px;border-radius:1.5px;background:#86867c"></div>
<svg style="position:absolute;left:995.00px;top:11.50px;" width="24" height="24.5" viewBox="0 0 24 24.5"><defs><linearGradient id="eg1" x1="0" y1="0" x2="1" y2="0"><stop offset="0" stop-color="#1b6fd1"/><stop offset=".55" stop-color="#2bb3d9"/><stop offset="1" stop-color="#5bdc6d"/></linearGradient><linearGradient id="eg2" x1="0" y1="0" x2="1" y2="1"><stop offset="0" stop-color="#1e8fdc"/><stop offset="1" stop-color="#114a9c"/></linearGradient></defs><path d="M.5 12 C.5 4.5 6 .3 12.4 .3 C19.4 .3 23.8 5 23.8 10 C23.8 13.6 21 15.6 18 15.6 C15.6 15.6 14.2 14.6 14.2 13.4 C14.2 12.4 15.2 12 15.2 10.4 C15.2 8.2 13 6.4 10.4 6.4 C5.6 6.4 .5 8 .5 12 Z" fill="url(#eg1)"/><path d="M.5 12 C.5 18.6 5.6 24 12.4 24 C17 24 20.6 21.4 22.4 18.4 C22.6 18 22.2 17.7 21.8 17.9 C20.4 18.7 18.8 19 17.2 19 C12 19 8.6 15.8 8.6 12 C8.6 10 9.6 8.4 11 7.4 C5.6 6.6 .5 8.2 .5 12 Z" fill="url(#eg2)"/><rect x="0" y="16" width="12" height="8" rx="1" fill="#b86a14"/><rect x="0" y="16" width="12" height="3.6" rx="1" fill="#d98a1f"/><path d="M4 16 V14.8 Q4 14 4.8 14 H7.2 Q8 14 8 14.8 V16" fill="none" stroke="#5a3a10" stroke-width="1"/><rect x="5.2" y="18.6" width="1.6" height="1.6" fill="#ffe08a"/></svg>
<svg style="position:absolute;left:1039.00px;top:13.00px;" width="23" height="23" viewBox="0 0 23 23"><defs><linearGradient id="st" x1="0" y1="0" x2="0" y2="1"><stop offset="0" stop-color="#1465b8"/><stop offset="1" stop-color="#123f7c"/></linearGradient></defs><path d="M6 5 V2.2 Q6 .8 7.4 .8 H15.6 Q17 .8 17 2.2 V5" fill="none" stroke="#36b6f2" stroke-width="1.8"/><path d="M0 5.4 Q0 4.2 1.2 4.2 H21.8 Q23 4.2 23 5.4 V19.6 Q23 22.8 19.8 22.8 H3.2 Q0 22.8 0 19.6 Z" fill="url(#st)"/><rect x="7" y="9" width="4.2" height="4.2" fill="#f25022"/><rect x="11.9" y="9" width="4.2" height="4.2" fill="#7fba00"/><rect x="7" y="13.9" width="4.2" height="4.2" fill="#00a4ef"/><rect x="11.9" y="13.9" width="4.2" height="4.2" fill="#ffb900"/></svg>
<svg style="position:absolute;left:1083.00px;top:11.50px;" width="24" height="24" viewBox="0 0 24 24"><circle cx="12" cy="12" r="12" fill="#fbc116"/><path d="M12 12 L1.6 6 A12 12 0 0 1 22.4 6 Z" fill="#e33b2e"/><path d="M12 12 L1.6 6 A12 12 0 0 0 12 24 L17.2 15 Z" fill="#2da94f"/><path d="M12 12 L22.4 6 H12 Z" fill="#e33b2e"/><circle cx="12" cy="12" r="5.6" fill="#fff"/><circle cx="12" cy="12" r="4.4" fill="#3f86f4"/></svg>
<div class="abs" style="left:1092.0px;top:40px;width:6px;height:3px;border-radius:1.5px;background:#86867c"></div>
<svg style="position:absolute;left:1127.00px;top:11.50px;" width="24" height="23.5" viewBox="0 0 24 23.5"><defs><linearGradient id="cp" x1="0" y1="0" x2="1" y2="1"><stop offset="0" stop-color="#5cc0fa"/><stop offset=".5" stop-color="#1f93ec"/><stop offset="1" stop-color="#0f6cd2"/></linearGradient></defs><path d="M.8 .8 L18.4 .3 L18.8 18.6 L15.6 19 V22 H13 V19.6 L9.6 20 V23.2 H6.6 V20 L1.2 19.2 Z" fill="url(#cp)"/><path d="M4.6 1 L5 19.6 M8.6 1 L9 20 M12.6 .8 L12.8 19.4 M1 6 L18.4 5.6 M1 11.6 L18.6 11.4" stroke="#a9e0fc" stroke-width=".9" opacity=".75"/><circle cx="17.6" cy="9.8" r="6.3" fill="#cfcfcf" stroke="#9e9e9e" stroke-width=".6"/><circle cx="17.6" cy="9.8" r="4.2" fill="#eeeeee"/><path d="M17.6 9.8 L12.4 6.6 A6.1 6.1 0 0 1 15 4.2 Z" fill="#8fd36a" opacity=".7"/><circle cx="17.6" cy="9.8" r="1.9" fill="#4aa3e6"/><circle cx="17.6" cy="9.8" r=".7" fill="#fff"/></svg>
<div class="abs" style="left:1136.0px;top:40px;width:6px;height:3px;border-radius:1.5px;background:#86867c"></div>
<svg style="position:absolute;left:1171.00px;top:13.00px;" width="24" height="21.5" viewBox="0 0 24 21.5"><rect x="6.4" y="0" width="17.6" height="21" rx="1.2" fill="#41a5ee"/><rect x="6.4" y="5.25" width="17.6" height="5.25" fill="#2b7cd3"/><rect x="6.4" y="10.5" width="17.6" height="5.25" fill="#185abd"/><path d="M6.4 15.75 H24 V19.8 Q24 21 22.8 21 H7.6 Q6.4 21 6.4 19.8 Z" fill="#103f91"/><rect x="0" y="4.6" width="12.4" height="12.4" rx="1.1" fill="#185abd"/><path d="M2.2 7.6 H3.8 L4.9 12.6 L6.1 7.6 H7.3 L8.5 12.6 L9.6 7.6 H11 L9.2 14.2 H7.8 L6.7 9.6 L5.5 14.2 H4.1 Z" fill="#fff"/></svg>
<div class="abs" style="left:1180.0px;top:40px;width:6px;height:3px;border-radius:1.5px;background:#86867c"></div>
<div class="abs" style="left:1208px;top:5px;width:38px;height:38.5px;border-radius:4.5px;background:rgba(255,255,255,.43);box-shadow:0 0 0 .6px rgba(120,120,100,.12)"></div>
<svg style="position:absolute;left:1216.00px;top:14.00px;" width="21.0" height="19.5" viewBox="0 0 21 19.5"><path d="M3.4 4 H15.25 V18.9 H3.4 Z" fill="#f7c066"/><path d="M15.25 3.6 H19.2 V18.9 H15.25 Z" fill="#e8b15a"/><path d="M1.5 2.25 L11.3 .7 L15.25 3.1 L3.4 4.4 Z" fill="#f3b95c"/><path d="M15.25 3.1 L17.4 1.2 L20.7 3.1 L19.2 4.9 H15.25 Z" fill="#dda54e"/><path d="M1 6 H8.7 V3.6 L15.25 9.5 L8.7 15.6 V12.75 H1 Z" fill="#45b286"/></svg>
<div class="abs" style="left:1221px;top:40px;width:12px;height:3px;border-radius:1.5px;background:#0b72d6"></div>
<svg style="position:absolute;left:1259.00px;top:12.00px;" width="24" height="24" viewBox="0 0 24 24"><path d="M17.75 .1 L1.04 14.67 L4.16 18.33 L17.75 7.1 Z" fill="#0a7bca"/><circle cx="2.6" cy="16.5" r="2.4" fill="#0a70bb"/><path d="M17.75 23.7 L1.04 9.13 L4.16 5.47 L17.75 16.9 Z" fill="#1290e0"/><circle cx="2.6" cy="7.3" r="2.4" fill="#1290e0"/><path d="M17.75 .1 L23.9 2.9 V20.9 L17.75 23.7 Z" fill="#2aa9f3"/></svg>
<div class="abs" style="left:1268.0px;top:40px;width:6px;height:3px;border-radius:1.5px;background:#86867c"></div>
<svg style="position:absolute;left:1303.00px;top:17.00px;" width="25" height="25" viewBox="0 0 25 25"><rect x="-.2" y="0" width="18.2" height="17.8" rx="2" fill="#ecedf1"/><path d="M2 5.3 V4 Q2 1.8 4.2 1.8 H4.8 V5.3 Z M6.2 1.8 H9 V5.3 H6.2 Z M10.2 1.8 H10.8 Q13 1.8 13 4 V5.3 H10.2 Z M2 6.3 H4.8 V8.7 H2 Z M2 10 H4.8 V13 H4.2 Q2 13 2 10.8 Z" fill="#e2380b"/><path d="M13.2 6.6 Q13.2 5.2 14.6 5.2 Q16 5.2 16 6.6 V18.3 H13.2 Z" fill="#8f959d"/><path d="M5.2 13 H17.8 V16 H6.6 Q5.2 16 5.2 14.5 Z" fill="#989ea6"/><circle cx="14.6" cy="14.5" r=".8" fill="#c9cdd2"/><path d="M17.6 12.6 L19.6 11.2 A2.9 2.9 0 1 1 19.6 15.8 L17.6 16.2 Z" fill="#1ba1f2"/><circle cx="21.5" cy="13.5" r=".7" fill="#d8f0ff"/><path d="M12.9 18 L11.4 19.8 A2.8 2.8 0 1 0 16 19.8 L16.2 18 Z" fill="#1ba1f2"/><circle cx="13.6" cy="21.5" r=".7" fill="#d8f0ff"/></svg>
<div class="abs" style="left:1308.2px;top:40.200000000000045px;width:13.6px;height:3px;border-radius:1.5px;background:#6f6f69"></div>
<svg style="position:absolute;left:1720.50px;top:20.00px;" width="11" height="7" viewBox="0 0 11 7"><path d="M.8 6 L5.5 1.2 L10.2 6" fill="none" stroke="#1b1b1b" stroke-width="1.3" stroke-linecap="round" stroke-linejoin="round"/></svg>
<svg style="position:absolute;left:1749.50px;top:16.50px;" width="17" height="15" viewBox="0 0 17 15"><defs><linearGradient id="cl" x1="0" y1="0" x2="1" y2="0"><stop offset="0" stop-color="#8f8f8f"/><stop offset="1" stop-color="#ececec"/></linearGradient></defs><path d="M4 12 C1.8 12 .8 10.4 .8 8.8 C.8 7 2.2 5.8 3.8 5.6 C4.6 3.2 6.4 2 8.6 2 C11.4 2 13.2 3.6 13.8 5.8 C15.4 6.2 16.3 7.4 16.3 9 C16.3 10.8 14.8 12 12.8 12 Z" fill="url(#cl)" fill-opacity=".55" stroke="#1b1b1b" stroke-width="1.15" stroke-linejoin="round"/><path d="M1.6 .8 L15.8 14.3" stroke="#1b1b1b" stroke-width="1.25" stroke-linecap="round"/></svg>
<svg style="position:absolute;left:1782.00px;top:15.50px;" width="17" height="17" viewBox="0 0 17 17"><path d="M10.6 1.4 H1.4 Q.7 1.4 .7 2.2 V12 Q.7 12.8 1.4 12.8 H13" fill="none" stroke="#1b1b1b" stroke-width="1.2"/><path d="M3.6 15.9 H13.8 M5.6 12.8 V15.9 M9.2 12.8 V15.9" stroke="#1b1b1b" stroke-width="1.2"/><rect x="11.6" y=".6" width="3.9" height="6.2" rx="1.4" fill="#e8e8e4" stroke="#1b1b1b" stroke-width="1.2"/><path d="M13.55 6.8 V16.4" stroke="#1b1b1b" stroke-width="1.2"/><path d="M12.6 3 H14.5" stroke="#1b1b1b" stroke-width="1"/></svg>
<svg style="position:absolute;left:1806.00px;top:18.00px;" width="16" height="12" viewBox="0 0 16 12"><path d="M.7 4 H3.2 L6.8 .8 V11.2 L3.2 8 H.7 Z" fill="none" stroke="#1b1b1b" stroke-width="1.1" stroke-linejoin="round"/><path d="M10.4 3.8 L14.8 8.2 M14.8 3.8 L10.4 8.2" stroke="#1b1b1b" stroke-width="1.1" stroke-linecap="round"/></svg>
<span style="position:absolute;top:7.60px;height:16px;line-height:16px;font-size:10.8px;white-space:pre;left:1878.80px;color:#1b1b1b;letter-spacing:0.220px;">9:13</span>
<span style="position:absolute;top:23.80px;height:16px;line-height:16px;font-size:10.8px;white-space:pre;left:1839.60px;color:#1b1b1b;letter-spacing:0.705px;">18/12/2025</span>
</div>
<div class="abs" style="left:1459px;top:892px;width:450px;height:106px;background:#f3f3f3;box-shadow:0 0 8px 2px rgba(0,0,0,.16)">
<svg style="position:absolute;left:10.00px;top:13.00px;" width="16" height="16" viewBox="0 0 16 16"><circle cx="8" cy="8" r="7.2" fill="none" stroke="#1a85ff" stroke-width="1.1"/><path d="M8 7 V11.4" stroke="#1a85ff" stroke-width="1.3"/><circle cx="8" cy="4.9" r=".9" fill="#1a85ff"/></svg>
<span style="position:absolute;top:11.30px;height:22px;line-height:22px;font-size:13px;white-space:pre;left:31.00px;color:#616161;letter-spacing:-0.045px;">You have Docker installed on your system. Do you want to</span>
<span style="position:absolute;top:33.30px;height:22px;line-height:22px;font-size:13px;white-space:pre;left:31.00px;color:#616161;letter-spacing:-0.012px;">install the recommended extensions for it?</span>
<svg style="position:absolute;left:395.50px;top:13.00px;" width="16" height="16" viewBox="0 0 16 16"><path d="M7.07 2.78 L6.82 0.90 L9.18 0.90 L8.93 2.78 L11.03 3.65 L12.19 2.14 L13.86 3.81 L12.35 4.97 L13.22 7.07 L15.10 6.82 L15.10 9.18 L13.22 8.93 L12.35 11.03 L13.86 12.19 L12.19 13.86 L11.03 12.35 L8.93 13.22 L9.18 15.10 L6.82 15.10 L7.07 13.22 L4.97 12.35 L3.81 13.86 L2.14 12.19 L3.65 11.03 L2.78 8.93 L0.90 9.18 L0.90 6.82 L2.78 7.07 L3.65 4.97 L2.14 3.81 L3.81 2.14 L4.97 3.65Z" fill="none" stroke="#424242" stroke-width="1" stroke-linejoin="round"/><circle cx="8" cy="8" r="2.1" fill="none" stroke="#424242" stroke-width="1"/></svg>
<svg style="position:absolute;left:425.50px;top:16.50px;" width="9" height="9" viewBox="0 0 9 9"><path d="M.5 .5 L8.5 8.5 M8.5 .5 L.5 8.5" stroke="#424242" stroke-width="1.1" fill="none"/></svg>
<div class="abs" style="left:228px;top:64px;width:51px;height:28px;background:#007acc;border-radius:2px"></div>
<span style="position:absolute;top:65.30px;height:28px;line-height:28px;font-size:13px;white-space:pre;left:238.50px;color:#fff;letter-spacing:-0.423px;">Install</span>
<div class="abs" style="left:289px;top:64px;width:151px;height:28px;background:#5f6a79;border-radius:2px"></div>
<span style="position:absolute;top:65.30px;height:28px;line-height:28px;font-size:13px;white-space:pre;left:299.50px;color:#fff;letter-spacing:-0.701px;">Show Recommendations</span>
</div>
<div class="abs" style="left:693px;top:321px;width:500px;height:418px;border-radius:8px;background:#f0f0f0;box-shadow:0 0 0 1px rgba(110,110,110,.5),0 18px 38px 2px rgba(0,0,0,.27),0 3px 16px rgba(0,0,0,.10);overflow:hidden;color:#000;font-size:12px">
<div class="abs" style="left:0;top:0;width:500px;height:25px;background:linear-gradient(90deg,#f2f4ee,#eff3f0 45%,#edf2f6)"></div>
<svg style="position:absolute;left:3.00px;top:5.50px;" width="14.7" height="13.649999999999999" viewBox="0 0 21 19.5"><path d="M3.4 4 H15.25 V18.9 H3.4 Z" fill="#f7c066"/><path d="M15.25 3.6 H19.2 V18.9 H15.25 Z" fill="#e8b15a"/><path d="M1.5 2.25 L11.3 .7 L15.25 3.1 L3.4 4.4 Z" fill="#f3b95c"/><path d="M15.25 3.1 L17.4 1.2 L20.7 3.1 L19.2 4.9 H15.25 Z" fill="#dda54e"/><path d="M1 6 H8.7 V3.6 L15.25 9.5 L8.7 15.6 V12.75 H1 Z" fill="#45b286"/></svg>
<span style="position:absolute;top:4.30px;height:18px;line-height:18px;font-size:12px;white-space:pre;left:25.00px;color:#000;letter-spacing:-0.172px;">Setup</span>
<div class="abs" style="left:381px;top:12px;width:10px;height:1px;background:#000"></div>
<div class="abs" style="left:426px;top:7px;width:10px;height:10px;border:1px solid #c4c4c4;border-radius:1.5px"></div>
<svg style="position:absolute;left:472.00px;top:7.00px;" width="10" height="10" viewBox="0 0 10 10"><path d="M.3 .3 L9.7 9.7 M9.7 .3 L.3 9.7" stroke="#000" stroke-width="1" fill="none"/></svg>
<div class="abs" style="left:0;top:25px;width:500px;height:59px;background:#fff"></div>
<div class="abs" style="left:0;top:84px;width:500px;height:1px;background:#a0a0a0"></div>
<div class="abs" style="left:0;top:85px;width:500px;height:1px;background:#fff"></div>
<span style="position:absolute;top:44.90px;height:18px;line-height:18px;font-size:12.5px;white-space:pre;left:13.00px;color:#000;font-weight:700;letter-spacing:-0.482px;">Select Components</span>
<div class="abs" style="left:450px;top:35px;width:38px;height:38px;border-radius:4px;background:linear-gradient(#ee7420,#fa7c22 18%,#f97a1f 75%,#ec6f18);box-shadow:inset 0 0 0 1px rgba(176,84,18,.75),inset 0 0 3px 1px rgba(200,96,20,.45)"></div>
<svg style="position:absolute;left:450.00px;top:35.00px;" width="38" height="38" viewBox="0 0 38 38"><path d="M4.5 2.6 H33.5 C31 5.4 27 6 19 6 C11 6 7 5.4 4.5 2.6 Z" fill="#fbb07a" opacity=".85"/><circle cx="12" cy="14.2" r="7.1" fill="#fff"/><circle cx="26" cy="14.2" r="7.1" fill="#fff"/><circle cx="12" cy="23.4" r="7.1" fill="#fff"/><circle cx="26" cy="23.4" r="7.1" fill="#fff"/><rect x="9" y="13" width="20" height="11.6" fill="#fff"/><g fill="none" stroke="#f97a1f" stroke-width="4.3" stroke-linecap="round"><path d="M12 23.8 C12 19.8 14.4 18.8 17.6 18.8 H22.4 C25 18.8 26 17.2 26 14.2"/><path d="M26 20.4 V23.8"/></g><circle cx="12" cy="14.2" r="2.4" fill="#f97a1f"/></svg>
<span style="position:absolute;top:103.30px;height:15px;line-height:15px;font-size:12px;white-space:pre;left:12.00px;color:#000;letter-spacing:0.029px;">Select the components you want to install; clear the components you do not want to</span>
<span style="position:absolute;top:118.30px;height:15px;line-height:15px;font-size:12px;white-space:pre;left:12.00px;color:#000;letter-spacing:-0.048px;">install. Click Next when you are ready to continue.</span>
<div class="abs" style="left:11px;top:150px;width:210px;height:210px;background:#fff;border-top:1px solid #000;border-left:1px solid #000;border-right:1px solid #fff;border-bottom:1px solid #fff;box-shadow:-1px -1px 0 #a0a0a0,1px 1px 0 #e3e3e3"></div>
<div class="abs" style="left:20px;top:151px;width:1px;height:136px;background:#000"></div>
<div class="abs" style="left:30px;top:151px;width:1px;height:64px;background:#000"></div>
<div class="abs" style="left:30px;top:233px;width:1px;height:36px;background:#000"></div>
<div class="abs" style="left:30px;top:287px;width:1px;height:54px;background:#000"></div>
<div class="abs" style="left:30px;top:160px;width:15px;height:1px;background:#000"></div>
<div class="abs" style="left:45px;top:154.0px;width:13px;height:13px;border-radius:3px;background:#0067c0"></div><svg style="position:absolute;left:45.00px;top:154.00px;" width="13" height="13" viewBox="0 0 13 13"><path d="M3.6 6.9 L5.5 8.7 L9.5 4.7" fill="none" stroke="#f2f8fd" stroke-width="1" stroke-linecap="round" stroke-linejoin="round"/></svg>
<span style="position:absolute;top:153.30px;height:16px;line-height:16px;font-size:12px;white-space:pre;left:63.00px;color:#000;letter-spacing:-0.402px;">MySQL</span>
<div class="abs" style="left:30px;top:178px;width:15px;height:1px;background:#000"></div>
<div class="abs" style="left:45px;top:172.0px;width:13px;height:13px;border-radius:3px;background:#0067c0"></div><svg style="position:absolute;left:45.00px;top:172.00px;" width="13" height="13" viewBox="0 0 13 13"><path d="M3.6 6.9 L5.5 8.7 L9.5 4.7" fill="none" stroke="#f2f8fd" stroke-width="1" stroke-linecap="round" stroke-linejoin="round"/></svg>
<span style="position:absolute;top:171.30px;height:16px;line-height:16px;font-size:12px;white-space:pre;left:63.00px;color:#000;letter-spacing:-0.390px;">FileZilla FTP Server</span>
<div class="abs" style="left:30px;top:196px;width:15px;height:1px;background:#000"></div>
<div class="abs" style="left:45px;top:190.0px;width:13px;height:13px;border-radius:3px;background:#0067c0"></div><svg style="position:absolute;left:45.00px;top:190.00px;" width="13" height="13" viewBox="0 0 13 13"><path d="M3.6 6.9 L5.5 8.7 L9.5 4.7" fill="none" stroke="#f2f8fd" stroke-width="1" stroke-linecap="round" stroke-linejoin="round"/></svg>
<span style="position:absolute;top:189.30px;height:16px;line-height:16px;font-size:12px;white-space:pre;left:63.00px;color:#000;letter-spacing:-0.124px;">Mercury Mail Server</span>
<div class="abs" style="left:30px;top:214px;width:15px;height:1px;background:#000"></div>
<div class="abs" style="left:45px;top:208.0px;width:13px;height:13px;border-radius:3px;background:#f6f6f6;border:1px solid #6f6f6f"></div>
<span style="position:absolute;top:207.30px;height:16px;line-height:16px;font-size:12px;white-space:pre;left:63.00px;color:#000;letter-spacing:0.387px;">Tomcat</span>
<div class="abs" style="left:20px;top:232px;width:15px;height:1px;background:#000"></div>
<div class="abs" style="left:16px;top:228.0px;width:9px;height:9px;background:#fff;border:1px solid #000"></div>
<div class="abs" style="left:18px;top:232px;width:5px;height:1px;background:#000"></div>
<div class="abs" style="left:35px;top:226.0px;width:13px;height:13px;border-radius:3px;background:#c5c5c5"></div><svg style="position:absolute;left:35.00px;top:226.00px;" width="13" height="13" viewBox="0 0 13 13"><path d="M3.6 6.9 L5.5 8.7 L9.5 4.7" fill="none" stroke="#f2f8fd" stroke-width="1" stroke-linecap="round" stroke-linejoin="round"/></svg>
<span style="position:absolute;top:225.30px;height:16px;line-height:16px;font-size:12px;white-space:pre;left:53.00px;color:#b4b4b4;letter-spacing:-0.161px;">Program Languages</span>
<div class="abs" style="left:30px;top:250px;width:15px;height:1px;background:#000"></div>
<div class="abs" style="left:45px;top:244.0px;width:13px;height:13px;border-radius:3px;background:#c5c5c5"></div><svg style="position:absolute;left:45.00px;top:244.00px;" width="13" height="13" viewBox="0 0 13 13"><path d="M3.6 6.9 L5.5 8.7 L9.5 4.7" fill="none" stroke="#f2f8fd" stroke-width="1" stroke-linecap="round" stroke-linejoin="round"/></svg>
<span style="position:absolute;top:243.30px;height:16px;line-height:16px;font-size:12px;white-space:pre;left:63.00px;color:#b4b4b4;letter-spacing:-0.725px;">PHP</span>
<div class="abs" style="left:30px;top:268px;width:15px;height:1px;background:#000"></div>
<div class="abs" style="left:45px;top:262.0px;width:13px;height:13px;border-radius:3px;background:#0067c0"></div><svg style="position:absolute;left:45.00px;top:262.00px;" width="13" height="13" viewBox="0 0 13 13"><path d="M3.6 6.9 L5.5 8.7 L9.5 4.7" fill="none" stroke="#f2f8fd" stroke-width="1" stroke-linecap="round" stroke-linejoin="round"/></svg>
<span style="position:absolute;top:261.30px;height:16px;line-height:16px;font-size:12px;white-space:pre;left:63.00px;color:#000;letter-spacing:-0.335px;">Perl</span>
<div class="abs" style="left:20px;top:286px;width:15px;height:1px;background:#000"></div>
<div class="abs" style="left:16px;top:282.0px;width:9px;height:9px;background:#fff;border:1px solid #000"></div>
<div class="abs" style="left:18px;top:286px;width:5px;height:1px;background:#000"></div>
<div class="abs" style="left:35px;top:280.0px;width:13px;height:13px;border-radius:3px;background:#c5c5c5"></div><svg style="position:absolute;left:35.00px;top:280.00px;" width="13" height="13" viewBox="0 0 13 13"><path d="M3.6 6.9 L5.5 8.7 L9.5 4.7" fill="none" stroke="#f2f8fd" stroke-width="1" stroke-linecap="round" stroke-linejoin="round"/></svg>
<span style="position:absolute;top:279.30px;height:16px;line-height:16px;font-size:12px;white-space:pre;left:53.00px;color:#b4b4b4;letter-spacing:-0.161px;">Program Languages</span>
<div class="abs" style="left:30px;top:304px;width:15px;height:1px;background:#000"></div>
<div class="abs" style="left:45px;top:298.0px;width:13px;height:13px;border-radius:3px;background:#0067c0"></div><svg style="position:absolute;left:45.00px;top:298.00px;" width="13" height="13" viewBox="0 0 13 13"><path d="M3.6 6.9 L5.5 8.7 L9.5 4.7" fill="none" stroke="#f2f8fd" stroke-width="1" stroke-linecap="round" stroke-linejoin="round"/></svg>
<span style="position:absolute;top:297.30px;height:16px;line-height:16px;font-size:12px;white-space:pre;left:63.00px;color:#000;letter-spacing:0.347px;">phpMyAdmin</span>
<div class="abs" style="left:30px;top:322px;width:15px;height:1px;background:#000"></div>
<div class="abs" style="left:45px;top:316.0px;width:13px;height:13px;border-radius:3px;background:#f6f6f6;border:1px solid #6f6f6f"></div>
<span style="position:absolute;top:315.30px;height:16px;line-height:16px;font-size:12px;white-space:pre;left:63.00px;color:#000;letter-spacing:-0.237px;">Webalizer</span>
<div class="abs" style="left:30px;top:340px;width:15px;height:1px;background:#000"></div>
<div class="abs" style="left:45px;top:334.0px;width:13px;height:13px;border-radius:3px;background:#0067c0"></div><svg style="position:absolute;left:45.00px;top:334.00px;" width="13" height="13" viewBox="0 0 13 13"><path d="M3.6 6.9 L5.5 8.7 L9.5 4.7" fill="none" stroke="#f2f8fd" stroke-width="1" stroke-linecap="round" stroke-linejoin="round"/></svg>
<span style="position:absolute;top:333.30px;height:16px;line-height:16px;font-size:12px;white-space:pre;left:63.00px;color:#000;letter-spacing:-0.311px;">Fake Sendmail</span>
<div class="abs" style="left:230px;top:192px;width:4px;height:152px;border-radius:2px;background:#868686"></div>
<span style="position:absolute;top:152.30px;height:15px;line-height:15px;font-size:12px;white-space:pre;left:258.00px;color:#000;letter-spacing:0.023px;">Click on a component to get a detailed</span>
<span style="position:absolute;top:167.30px;height:15px;line-height:15px;font-size:12px;white-space:pre;left:258.00px;color:#000;letter-spacing:0.088px;">description</span>
<span style="position:absolute;top:364.30px;height:15px;line-height:15px;font-size:12px;white-space:pre;left:5.00px;color:#a8a8a8;letter-spacing:-0.098px;">VMware InstallBuilder</span>
<div class="abs" style="left:124px;top:369px;width:375px;height:1px;background:#a0a0a0"></div>
<div class="abs" style="left:124px;top:370px;width:375px;height:1px;background:#fff"></div>
<div class="abs" style="left:258px;top:387px;width:74px;height:23px;background:#fdfdfd;border:1px solid #d0d0d0;border-radius:4px"></div>
<span style="position:absolute;top:391.30px;height:16px;line-height:16px;font-size:12px;white-space:pre;left:277.50px;color:#000;letter-spacing:-0.170px;">&lt; Back</span>
<div class="abs" style="left:338px;top:387px;width:74px;height:23px;background:#fdfdfd;border:1px solid #d0d0d0;border-radius:4px"></div>
<span style="position:absolute;top:391.30px;height:16px;line-height:16px;font-size:12px;white-space:pre;left:357.00px;color:#000;letter-spacing:-0.253px;">Next &gt;</span>
<div class="abs" style="left:418px;top:387px;width:74px;height:23px;background:#fdfdfd;border:1px solid #d0d0d0;border-radius:4px"></div>
<span style="position:absolute;top:391.30px;height:16px;line-height:16px;font-size:12px;white-space:pre;left:437.00px;color:#000;letter-spacing:-0.226px;">Cancel</span>
</div>
</body></html>
